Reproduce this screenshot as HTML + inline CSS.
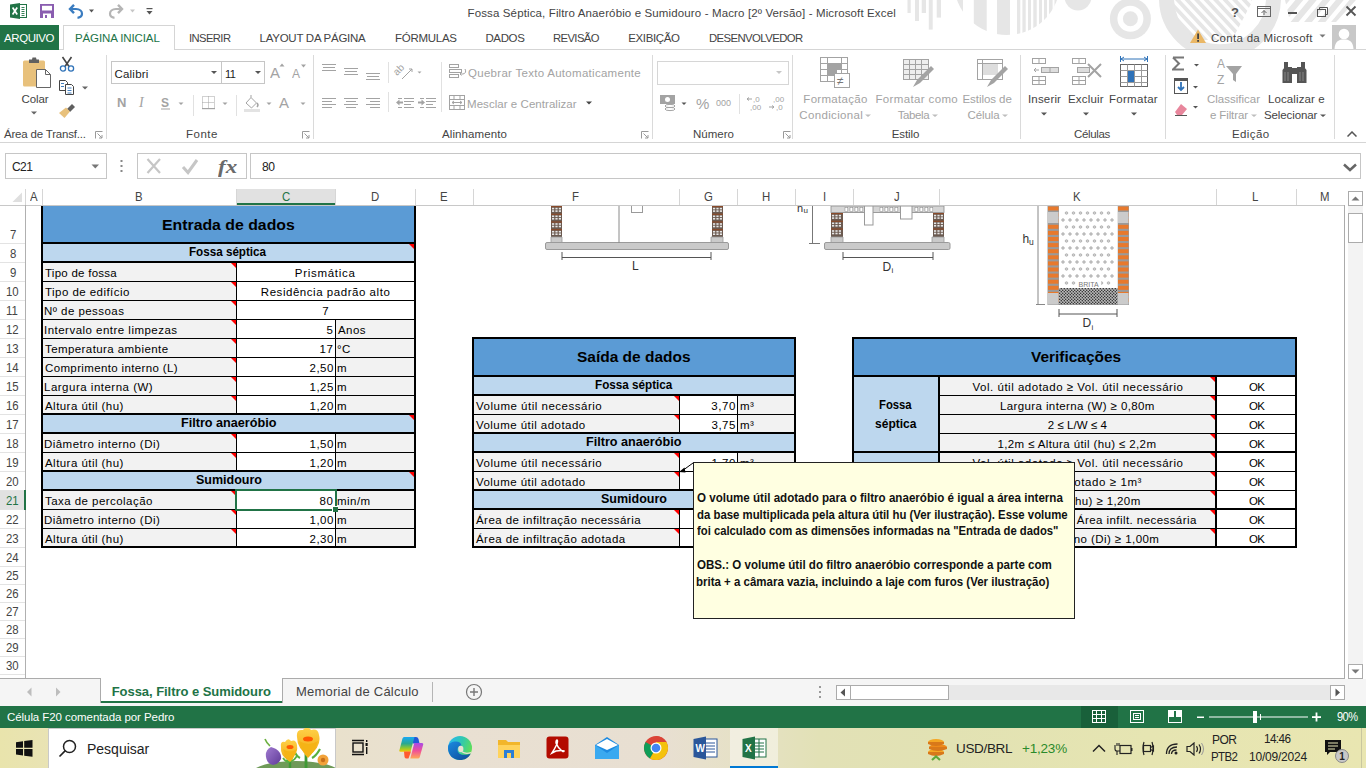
<!DOCTYPE html>
<html><head><meta charset="utf-8"><style>
html,body{margin:0;padding:0;width:1366px;height:768px;overflow:hidden;background:#fff;}
body{position:relative;font-family:"Liberation Sans",sans-serif;}
div{position:absolute;box-sizing:border-box;}
.t{white-space:pre;transform-origin:0 0;}
.s{-webkit-text-stroke:0.1px currentColor;}
</style></head><body>
<svg style="position:absolute;left:0px;top:0px;" width="1366" height="49" viewBox="0 0 1366 49"><rect x="907.5" y="0" width="3.2000000000000455" height="13" fill="#e6e6e6"/><rect x="915" y="0" width="4" height="21" fill="#e6e6e6"/><rect x="921.7" y="0" width="4.2999999999999545" height="13" fill="#e6e6e6"/><rect x="928.8" y="0" width="3.900000000000091" height="29.6" fill="#e6e6e6"/><rect x="936.7" y="0" width="4.2999999999999545" height="17.6" fill="#e6e6e6"/><clipPath id="c1"><circle cx="1007" cy="-18.2" r="53.2"/></clipPath><g clip-path="url(#c1)"><rect x="950" y="0" width="13" height="40" fill="#e6e6e6"/><rect x="973.8" y="0" width="12.900000000000091" height="40" fill="#e6e6e6"/><rect x="997" y="0" width="13" height="40" fill="#e6e6e6"/><rect x="1017" y="0" width="3.2999999999999545" height="40" fill="#e6e6e6"/><rect x="1022.4" y="0" width="3.300000000000068" height="40" fill="#e6e6e6"/><rect x="1028" y="0" width="3" height="40" fill="#e6e6e6"/><rect x="1033.3" y="0" width="3.400000000000091" height="40" fill="#e6e6e6"/><rect x="1039" y="0" width="3" height="40" fill="#e6e6e6"/><rect x="1044" y="0" width="3" height="40" fill="#e6e6e6"/><rect x="1049" y="0" width="3.599999999999909" height="40" fill="#e6e6e6"/><rect x="1054.5" y="0" width="3.5" height="40" fill="#e6e6e6"/></g><circle cx="1078" cy="-3" r="13.5" fill="#e6e6e6"/><circle cx="1130.4" cy="18.7" r="20.5" fill="#e6e6e6"/><circle cx="1130.4" cy="18.7" r="13" fill="#fff"/><circle cx="1130.4" cy="18.7" r="7.5" fill="#e6e6e6"/><clipPath id="c2"><circle cx="1220" cy="-1.7" r="47"/></clipPath><clipPath id="c2b"><path d="M1150 -10 H1252 V2 L1232 40 H1150 Z"/></clipPath><circle cx="1220" cy="-1.7" r="53.5" fill="none" stroke="#e6e6e6" stroke-width="15"/><g clip-path="url(#c2)"><g clip-path="url(#c2b)"><line x1="1140.0" y1="-20" x2="1210.0" y2="55" stroke="#e6e6e6" stroke-width="3.8"/><line x1="1149.5" y1="-20" x2="1219.5" y2="55" stroke="#e6e6e6" stroke-width="3.8"/><line x1="1159.0" y1="-20" x2="1229.0" y2="55" stroke="#e6e6e6" stroke-width="3.8"/><line x1="1168.5" y1="-20" x2="1238.5" y2="55" stroke="#e6e6e6" stroke-width="3.8"/><line x1="1178.0" y1="-20" x2="1248.0" y2="55" stroke="#e6e6e6" stroke-width="3.8"/><line x1="1187.5" y1="-20" x2="1257.5" y2="55" stroke="#e6e6e6" stroke-width="3.8"/><line x1="1197.0" y1="-20" x2="1267.0" y2="55" stroke="#e6e6e6" stroke-width="3.8"/><line x1="1206.5" y1="-20" x2="1276.5" y2="55" stroke="#e6e6e6" stroke-width="3.8"/><line x1="1216.0" y1="-20" x2="1286.0" y2="55" stroke="#e6e6e6" stroke-width="3.8"/><line x1="1225.5" y1="-20" x2="1295.5" y2="55" stroke="#e6e6e6" stroke-width="3.8"/><line x1="1235.0" y1="-20" x2="1305.0" y2="55" stroke="#e6e6e6" stroke-width="3.8"/><line x1="1244.5" y1="-20" x2="1314.5" y2="55" stroke="#e6e6e6" stroke-width="3.8"/><line x1="1254.0" y1="-20" x2="1324.0" y2="55" stroke="#e6e6e6" stroke-width="3.8"/><line x1="1263.5" y1="-20" x2="1333.5" y2="55" stroke="#e6e6e6" stroke-width="3.8"/></g></g><clipPath id="c3"><path d="M1285 0 H1356 L1336 22 H1290 Z"/></clipPath><g clip-path="url(#c3)"><line x1="1290.0" y1="-5" x2="1265.0" y2="25" stroke="#e6e6e6" stroke-width="6"/><line x1="1303.5" y1="-5" x2="1278.5" y2="25" stroke="#e6e6e6" stroke-width="6"/><line x1="1317.0" y1="-5" x2="1292.0" y2="25" stroke="#e6e6e6" stroke-width="6"/><line x1="1330.5" y1="-5" x2="1305.5" y2="25" stroke="#e6e6e6" stroke-width="6"/><line x1="1344.0" y1="-5" x2="1319.0" y2="25" stroke="#e6e6e6" stroke-width="6"/><line x1="1357.5" y1="-5" x2="1332.5" y2="25" stroke="#e6e6e6" stroke-width="6"/><line x1="1371.0" y1="-5" x2="1346.0" y2="25" stroke="#e6e6e6" stroke-width="6"/></g></svg>
<svg style="position:absolute;left:9px;top:2px;" width="19" height="18" viewBox="0 0 19 18"><rect x="10.5" y="2.5" width="7" height="13" fill="#fff" stroke="#217346" stroke-width="1"/>
<path d="M12.5 5.5h3M12.5 7.5h3M12.5 9.5h3M12.5 11.5h3M12.5 13.5h3" stroke="#217346" stroke-width="0.9"/>
<path d="M1 2.5 L11 1 L11 17 L1 15.5 Z" fill="#217346"/>
<path d="M3.6 5.5 L8.2 12.5 M8.2 5.5 L3.6 12.5" stroke="#fff" stroke-width="1.7"/></svg>
<svg style="position:absolute;left:40px;top:4px;" width="14" height="14" viewBox="0 0 14 14"><rect x="0" y="0" width="14" height="14" fill="#8a5db0"/>
<rect x="2" y="1.8" width="10" height="4.7" fill="#fff"/><rect x="3" y="9.5" width="8" height="4.5" fill="#fff"/><rect x="5" y="11" width="2" height="3" fill="#8a5db0"/></svg>
<svg style="position:absolute;left:67px;top:3px;" width="30" height="16" viewBox="0 0 30 16"><path d="M7 1.8 L3 6 L7 10.2" fill="none" stroke="#3a7cc0" stroke-width="2.4"/>
<path d="M3.5 6 H9 C13 6 15 8.3 15 10.8 C15 13.3 13 14.5 10.5 14.8" fill="none" stroke="#3a7cc0" stroke-width="2.2"/>
<path d="M22 6.5 L27 6.5 L24.5 9.5 Z" fill="#555"/></svg>
<svg style="position:absolute;left:108px;top:3px;" width="30" height="16" viewBox="0 0 30 16"><path d="M10 1.8 L14 6 L10 10.2" fill="none" stroke="#b5b5b5" stroke-width="2.4"/>
<path d="M13.5 6 H8 C4 6 2 8.3 2 10.8 C2 13.3 4 14.5 6.5 14.8" fill="none" stroke="#b5b5b5" stroke-width="2.2"/>
<path d="M22 6.5 L27 6.5 L24.5 9.5 Z" fill="#c6c6c6"/></svg>
<svg style="position:absolute;left:146px;top:8px;" width="8" height="8" viewBox="0 0 8 8"><rect x="0.5" y="0" width="6" height="1.2" fill="#555"/><path d="M0.5 3 L6.5 3 L3.5 6.5 Z" fill="#555"/></svg>
<div class="t" style="left:467.50px;top:8px;font-weight:400;font-size:11.5px;line-height:11.5px;font-family:'Liberation Sans';color:#444444;letter-spacing:0.131px;">Fossa Séptica, Filtro Anaeróbio e Sumidouro - Macro [2º Versão] - Microsoft Excel</div>
<svg style="position:absolute;left:1228px;top:4px;" width="130" height="16" viewBox="0 0 130 16"><text x="3" y="12.5" font-family="Liberation Sans" font-weight="700" font-size="13" fill="#555">?</text>
<rect x="29.5" y="2.5" width="13" height="10" fill="none" stroke="#666" stroke-width="1"/><path d="M30 4.5h12" stroke="#666"/><path d="M36 11V6.5 M33.5 9 L36 6.5 L38.5 9" stroke="#666" fill="none"/>
<rect x="60" y="8" width="9" height="2" fill="#555"/>
<rect x="89.5" y="5.5" width="8" height="7" fill="none" stroke="#555"/><path d="M91.5 5.5V3.5h8v7h-2" fill="none" stroke="#555"/>
<path d="M118.5 2.5 L127.5 11.5 M127.5 2.5 L118.5 11.5" stroke="#555" stroke-width="1.8"/></svg>
<div style="left:0px;top:49px;width:1366px;height:1px;background:#d5d5d5;"></div>
<div style="left:0px;top:25px;width:59px;height:25px;background:#217346;"></div>
<div class="t" style="left:4.00px;top:33px;font-weight:400;font-size:11.5px;line-height:11.5px;font-family:'Liberation Sans';color:#fff;letter-spacing:-0.417px;">ARQUIVO</div>
<div style="left:63px;top:25px;width:112px;height:25px;background:#fff;border:1px solid #d5d5d5;border-bottom:none"></div>
<div class="t" style="left:75.00px;top:33px;font-weight:400;font-size:11.5px;line-height:11.5px;font-family:'Liberation Sans';color:#217346;letter-spacing:-0.115px;">PÁGINA INICIAL</div>
<div class="t" style="left:189.32px;top:33px;font-weight:400;font-size:11.5px;line-height:11.5px;font-family:'Liberation Sans';color:#444444;transform:scaleX(0.9758);letter-spacing:-0.600px;">INSERIR</div>
<div class="t" style="left:259.60px;top:33px;font-weight:400;font-size:11.5px;line-height:11.5px;font-family:'Liberation Sans';color:#444444;letter-spacing:-0.267px;">LAYOUT DA PÁGINA</div>
<div class="t" style="left:395.00px;top:33px;font-weight:400;font-size:11.5px;line-height:11.5px;font-family:'Liberation Sans';color:#444444;letter-spacing:-0.271px;">FÓRMULAS</div>
<div class="t" style="left:485.40px;top:33px;font-weight:400;font-size:11.5px;line-height:11.5px;font-family:'Liberation Sans';color:#444444;letter-spacing:-0.350px;">DADOS</div>
<div class="t" style="left:553.32px;top:33px;font-weight:400;font-size:11.5px;line-height:11.5px;font-family:'Liberation Sans';color:#444444;transform:scaleX(0.9784);letter-spacing:-0.600px;">REVISÃO</div>
<div class="t" style="left:628.30px;top:33px;font-weight:400;font-size:11.5px;line-height:11.5px;font-family:'Liberation Sans';color:#444444;letter-spacing:-0.386px;">EXIBIÇÃO</div>
<div class="t" style="left:708.51px;top:33px;font-weight:400;font-size:11.5px;line-height:11.5px;font-family:'Liberation Sans';color:#444444;transform:scaleX(0.9861);letter-spacing:-0.600px;">DESENVOLVEDOR</div>
<svg style="position:absolute;left:1190px;top:29px;" width="18" height="15" viewBox="0 0 18 15"><path d="M8 0.5 L16 14 L0 14 Z" fill="#eab765"/><rect x="7.2" y="4.5" width="1.8" height="5.5" fill="#444"/><rect x="7.2" y="11" width="1.8" height="1.8" fill="#444"/></svg>
<div class="t" style="left:1211.00px;top:33px;font-weight:400;font-size:11.5px;line-height:11.5px;font-family:'Liberation Sans';color:#444444;letter-spacing:0.294px;">Conta da Microsoft</div>
<svg style="position:absolute;left:1319px;top:34px;" width="8" height="5" viewBox="0 0 8 5"><path d="M0.5 0.5 L6.5 0.5 L3.5 3.5 Z" fill="#777"/></svg>
<svg style="position:absolute;left:1332px;top:25px;" width="24" height="24" viewBox="0 0 24 24"><rect width="24" height="24" fill="#c8c8c8"/><circle cx="12" cy="9" r="5.3" fill="#fff"/><path d="M2.5 24 C3 16 7 14.5 12 14.5 C17 14.5 21 16 21.5 24 Z" fill="#fff"/></svg>
<div style="left:0px;top:142px;width:1366px;height:1px;background:#d5d5d5;"></div>
<div style="left:106px;top:55px;width:1px;height:84px;background:#dadada;"></div>
<div style="left:313px;top:55px;width:1px;height:84px;background:#dadada;"></div>
<div style="left:652px;top:55px;width:1px;height:84px;background:#dadada;"></div>
<div style="left:792px;top:55px;width:1px;height:84px;background:#dadada;"></div>
<div style="left:1020px;top:55px;width:1px;height:84px;background:#dadada;"></div>
<div style="left:1165px;top:55px;width:1px;height:84px;background:#dadada;"></div>
<div style="left:1334px;top:55px;width:1px;height:84px;background:#dadada;"></div>
<div class="t" style="left:4.00px;top:129px;font-weight:400;font-size:11.5px;line-height:11.5px;font-family:'Liberation Sans';color:#444444;letter-spacing:-0.188px;">Área de Transf...</div>
<div class="t" style="left:186.00px;top:129px;font-weight:400;font-size:11.5px;line-height:11.5px;font-family:'Liberation Sans';color:#444444;letter-spacing:0.500px;">Fonte</div>
<div class="t" style="left:442.00px;top:129px;font-weight:400;font-size:11.5px;line-height:11.5px;font-family:'Liberation Sans';color:#444444;letter-spacing:0.100px;">Alinhamento</div>
<div class="t" style="left:693.00px;top:129px;font-weight:400;font-size:11.5px;line-height:11.5px;font-family:'Liberation Sans';color:#444444;">Número</div>
<div class="t" style="left:891.70px;top:129px;font-weight:400;font-size:11.5px;line-height:11.5px;font-family:'Liberation Sans';color:#444444;letter-spacing:-0.080px;">Estilo</div>
<div class="t" style="left:1074.00px;top:129px;font-weight:400;font-size:11.5px;line-height:11.5px;font-family:'Liberation Sans';color:#444444;letter-spacing:-0.333px;">Células</div>
<div class="t" style="left:1232.00px;top:129px;font-weight:400;font-size:11.5px;line-height:11.5px;font-family:'Liberation Sans';color:#444444;letter-spacing:0.400px;">Edição</div>
<svg style="position:absolute;left:95px;top:131px;" width="8" height="8" viewBox="0 0 8 8"><path d="M0.5 7.5V0.5h7" fill="none" stroke="#9a9a9a"/><path d="M2.5 2.5 L7 7 M4 7h3v-3" fill="none" stroke="#9a9a9a"/></svg>
<svg style="position:absolute;left:302px;top:131px;" width="8" height="8" viewBox="0 0 8 8"><path d="M0.5 7.5V0.5h7" fill="none" stroke="#9a9a9a"/><path d="M2.5 2.5 L7 7 M4 7h3v-3" fill="none" stroke="#9a9a9a"/></svg>
<svg style="position:absolute;left:641px;top:131px;" width="8" height="8" viewBox="0 0 8 8"><path d="M0.5 7.5V0.5h7" fill="none" stroke="#9a9a9a"/><path d="M2.5 2.5 L7 7 M4 7h3v-3" fill="none" stroke="#9a9a9a"/></svg>
<svg style="position:absolute;left:783px;top:131px;" width="8" height="8" viewBox="0 0 8 8"><path d="M0.5 7.5V0.5h7" fill="none" stroke="#9a9a9a"/><path d="M2.5 2.5 L7 7 M4 7h3v-3" fill="none" stroke="#9a9a9a"/></svg>
<svg style="position:absolute;left:22px;top:57px;" width="30" height="32" viewBox="0 0 30 32"><rect x="1" y="3.5" width="22" height="26" rx="1.5" fill="#e8c17c"/>
<path d="M7 6 L7 2.5 L10 2.5 L10.5 0.5 L14 0.5 L14.5 2.5 L17 2.5 L17 6 Z" fill="#5f5f5f"/>
<path d="M14.5 12.5 L23.5 12.5 L28.5 17.5 L28.5 30.5 L14.5 30.5 Z" fill="#fff" stroke="#666" stroke-width="1"/>
<path d="M23.5 12.5 V17.5 H28.5" fill="none" stroke="#666" stroke-width="1"/></svg>
<div class="t" style="left:21.50px;top:94px;font-weight:400;font-size:11.5px;line-height:11.5px;font-family:'Liberation Sans';color:#444444;letter-spacing:-0.125px;">Colar</div>
<svg style="position:absolute;left:31px;top:111px;" width="7" height="5" viewBox="0 0 7 5"><path d="M0 0.5 L6 0.5 L3 3.5 Z" fill="#666"/></svg>
<svg style="position:absolute;left:59px;top:56px;" width="16" height="16" viewBox="0 0 16 16"><path d="M3.5 1 L10 10.5 M12.5 1 L6 10.5" stroke="#444" stroke-width="1.6"/>
<circle cx="4" cy="12.5" r="2.6" fill="none" stroke="#2f72b8" stroke-width="1.3"/><circle cx="12" cy="12.5" r="2.6" fill="none" stroke="#2f72b8" stroke-width="1.3"/></svg>
<svg style="position:absolute;left:58px;top:79px;" width="17" height="16" viewBox="0 0 17 16"><path d="M1.5 1.5h6l2 2v8h-8z" fill="#fff" stroke="#444"/><path d="M3 4.5h3M3 7.5h3" stroke="#2f72b8" stroke-width="0.9"/>
<path d="M7.5 5.5h6l2 2v8h-8z" fill="#fff" stroke="#444"/><path d="M9.5 9h4M9.5 11.5h4M9.5 14h4" stroke="#2f72b8" stroke-width="0.9"/></svg>
<svg style="position:absolute;left:82px;top:86px;" width="7" height="5" viewBox="0 0 7 5"><path d="M0 0.5 L6 0.5 L3 3.5 Z" fill="#666"/></svg>
<svg style="position:absolute;left:58px;top:102px;" width="18" height="16" viewBox="0 0 18 16"><path d="M9 7 L14 2 L17 5 L12 10 Z" fill="#5f5f5f"/><path d="M1 11 L8 5.5 L12 9.5 L6.5 16 Z" fill="#e8c17c"/></svg>
<div style="left:111px;top:61px;width:111px;height:23px;background:#fff;box-shadow:inset 0 0 0 1px #c6c6c6;"></div>
<div style="left:221px;top:61px;width:44px;height:23px;background:#fff;box-shadow:inset 0 0 0 1px #c6c6c6;"></div>
<div class="t" style="left:114.40px;top:69px;font-weight:400;font-size:11.5px;line-height:11.5px;font-family:'Liberation Sans';color:#222;letter-spacing:0.233px;">Calibri</div>
<div class="t" style="left:225.04px;top:69px;font-weight:400;font-size:11.5px;line-height:11.5px;font-family:'Liberation Sans';color:#222;transform:scaleX(0.9615);letter-spacing:-0.600px;">11</div>
<svg style="position:absolute;left:211px;top:71px;" width="7" height="4" viewBox="0 0 7 4"><path d="M0 0 L6 0 L3 3 Z" fill="#555"/></svg>
<svg style="position:absolute;left:255px;top:71px;" width="7" height="4" viewBox="0 0 7 4"><path d="M0 0 L6 0 L3 3 Z" fill="#555"/></svg>
<svg style="position:absolute;left:270px;top:63px;" width="16" height="18" viewBox="0 0 16 18"><text x="0" y="15" font-family="Liberation Sans" font-size="15" fill="#a3a3a3">A</text><path d="M9.5 3.5 L12 0.5 L14.5 3.5 Z" fill="#a3a3a3"/></svg>
<svg style="position:absolute;left:292px;top:64px;" width="15" height="16" viewBox="0 0 15 16"><text x="0" y="14" font-family="Liberation Sans" font-size="12" fill="#a3a3a3">A</text><path d="M9 0.5 L14 0.5 L11.5 3.5 Z" fill="#a3a3a3"/></svg>
<svg style="position:absolute;left:115px;top:94px;" width="195" height="22" viewBox="0 0 195 22"><text x="2" y="13" font-family="Liberation Sans" font-weight="700" font-size="13" fill="#a3a3a3">N</text>
<text x="24" y="13" font-family="Liberation Serif" font-style="italic" font-size="14" fill="#a3a3a3">I</text>
<text x="46" y="13" font-family="Liberation Sans" font-weight="700" font-size="12" fill="#a3a3a3">S</text><rect x="46" y="14.5" width="9" height="1" fill="#a3a3a3"/>
<path d="M63.5 8.5 L68.5 8.5 L66 11 Z" fill="#a3a3a3"/>
<rect x="78" y="1" width="1" height="22" fill="#e1e1e1"/>
<rect x="87.5" y="2.5" width="12" height="12" fill="none" stroke="#a3a3a3" stroke-dasharray="1 1"/><path d="M93.5 2.5v12M87.5 8.5h12" stroke="#a3a3a3" stroke-dasharray="1 1"/><rect x="87" y="14" width="13" height="1.2" fill="#a3a3a3"/>
<path d="M107.5 8.5 L112.5 8.5 L110 11 Z" fill="#a3a3a3"/>
<rect x="121" y="1" width="1" height="22" fill="#e1e1e1"/>
<path d="M131 9 L136 3.5 L141.5 9 L136.5 14 Z" fill="none" stroke="#a3a3a3"/><path d="M136 3.5 V1" stroke="#a3a3a3"/><path d="M142 9 q2 2 0 4" fill="none" stroke="#a3a3a3" stroke-width="1.5"/>
<rect x="129" y="15" width="16" height="3" fill="#e3e3e3"/>
<path d="M151.5 8.5 L156.5 8.5 L154 11 Z" fill="#a3a3a3"/>
<text x="164" y="14" font-family="Liberation Sans" font-size="15" fill="#a3a3a3">A</text>
<path d="M185.5 8.5 L190.5 8.5 L188 11 Z" fill="#a3a3a3"/></svg>
<svg style="position:absolute;left:321px;top:62px;" width="140" height="50" viewBox="0 0 140 50"><rect x="1" y="2" width="14" height="1" fill="#a3a3a3"/><rect x="2" y="5" width="12" height="1" fill="#a3a3a3"/><rect x="1" y="8" width="14" height="1" fill="#a3a3a3"/><rect x="23" y="6" width="14" height="1" fill="#a3a3a3"/><rect x="24" y="9" width="12" height="1" fill="#a3a3a3"/><rect x="23" y="12" width="14" height="1" fill="#a3a3a3"/><rect x="45" y="11" width="14" height="1" fill="#a3a3a3"/><rect x="46" y="14" width="12" height="1" fill="#a3a3a3"/><rect x="45" y="17" width="14" height="1" fill="#a3a3a3"/><rect x="1" y="36" width="14" height="1" fill="#a3a3a3"/><rect x="1" y="39" width="10" height="1" fill="#a3a3a3"/><rect x="1" y="42" width="14" height="1" fill="#a3a3a3"/><rect x="1" y="45" width="10" height="1" fill="#a3a3a3"/><rect x="23" y="36" width="14" height="1" fill="#a3a3a3"/><rect x="25" y="39" width="10" height="1" fill="#a3a3a3"/><rect x="23" y="42" width="14" height="1" fill="#a3a3a3"/><rect x="25" y="45" width="10" height="1" fill="#a3a3a3"/><rect x="45" y="36" width="14" height="1" fill="#a3a3a3"/><rect x="49" y="39" width="10" height="1" fill="#a3a3a3"/><rect x="45" y="42" width="14" height="1" fill="#a3a3a3"/><rect x="49" y="45" width="10" height="1" fill="#a3a3a3"/><rect x="67" y="-1" width="1" height="22" fill="#e1e1e1"/><rect x="67" y="30" width="1" height="22" fill="#e1e1e1"/><rect x="77" y="36" width="4" height="1" fill="#a3a3a3"/><rect x="77" y="45" width="4" height="1" fill="#a3a3a3"/><rect x="83" y="36" width="10" height="1" fill="#a3a3a3"/><rect x="83" y="39" width="10" height="1" fill="#a3a3a3"/><rect x="83" y="42" width="7" height="1" fill="#a3a3a3"/><rect x="83" y="45" width="10" height="1" fill="#a3a3a3"/><path d="M75 40.5 L78.5 37.5 V39.5 H82 V41.5 H78.5 V43.5 Z" fill="#a3a3a3"/><rect x="99" y="36" width="4" height="1" fill="#a3a3a3"/><rect x="99" y="45" width="4" height="1" fill="#a3a3a3"/><rect x="105" y="36" width="10" height="1" fill="#a3a3a3"/><rect x="105" y="39" width="10" height="1" fill="#a3a3a3"/><rect x="105" y="42" width="7" height="1" fill="#a3a3a3"/><rect x="105" y="45" width="10" height="1" fill="#a3a3a3"/><path d="M104 40.5 L100.5 37.5 V39.5 H97 V41.5 H100.5 V43.5 Z" fill="#a3a3a3"/><text x="74.5" y="12.5" font-family="Liberation Sans" font-size="10" fill="#a3a3a3" transform="rotate(-45 80 10) translate(0 -2.5)">ab</text><path d="M81 17 L91 7 M88 7 h3 v3" stroke="#a3a3a3" fill="none"/><path d="M96.5 9.5 L100.5 9.5 L98.5 11.5 Z" fill="#a3a3a3"/><rect x="120" y="-2" width="1" height="54" fill="#e1e1e1"/></svg>
<svg style="position:absolute;left:448px;top:63px;" width="20" height="18" viewBox="0 0 20 18"><rect x="1.5" y="1.5" width="9" height="3" fill="none" stroke="#a3a3a3"/><rect x="1.5" y="6.5" width="12" height="3" fill="none" stroke="#a3a3a3"/><rect x="1.5" y="11.5" width="9" height="3" fill="none" stroke="#a3a3a3"/>
<path d="M17 6 q2 4 -2 5 h-3 M13.5 9.5 L12 11 L13.5 12.5" fill="none" stroke="#a3a3a3"/></svg>
<div class="t" style="left:468.00px;top:68px;font-weight:400;font-size:11.5px;line-height:11.5px;font-family:'Liberation Sans';color:#a3a3a3;letter-spacing:0.286px;">Quebrar Texto Automaticamente</div>
<svg style="position:absolute;left:448px;top:94px;" width="18" height="17" viewBox="0 0 18 17"><rect x="1.5" y="1.5" width="15" height="14" fill="none" stroke="#a3a3a3"/><path d="M1.5 5.5h15M1.5 11.5h15M6 1.5v4M12 1.5v4M6 11.5v4M12 11.5v4" stroke="#a3a3a3"/>
<path d="M4 8.5h10 M4 8.5 l2 -1.5 M4 8.5 l2 1.5 M14 8.5 l-2 -1.5 M14 8.5 l-2 1.5" stroke="#a3a3a3" fill="none"/></svg>
<div class="t" style="left:467.00px;top:99px;font-weight:400;font-size:11.5px;line-height:11.5px;font-family:'Liberation Sans';color:#a3a3a3;letter-spacing:0.050px;">Mesclar e Centralizar</div>
<svg style="position:absolute;left:586px;top:101px;" width="7" height="5" viewBox="0 0 7 5"><path d="M0 0.5 L6 0.5 L3 3.5 Z" fill="#444"/></svg>
<div style="left:657px;top:61px;width:132px;height:24px;background:#fff;box-shadow:inset 0 0 0 1px #d6d6d6;"></div>
<svg style="position:absolute;left:776px;top:71px;" width="7" height="4" viewBox="0 0 7 4"><path d="M0 0 L6 0 L3 3 Z" fill="#c6c6c6"/></svg>
<svg style="position:absolute;left:659px;top:94px;" width="135" height="20" viewBox="0 0 135 20"><rect x="1" y="1" width="15" height="9" fill="#a3a3a3"/><circle cx="8.5" cy="5.5" r="2.5" fill="#fff"/>
<ellipse cx="11" cy="12" rx="5" ry="1.6" fill="none" stroke="#a3a3a3"/><ellipse cx="11" cy="15" rx="5" ry="1.6" fill="none" stroke="#a3a3a3"/>
<path d="M22.5 8.5 L27.5 8.5 L25 11 Z" fill="#555"/>
<text x="37" y="14.5" font-family="Liberation Sans" font-size="15" fill="#a3a3a3">%</text>
<text x="57" y="12" font-family="Liberation Sans" font-size="9" fill="#a3a3a3">000</text>
<rect x="80" y="0" width="1" height="20" fill="#e1e1e1"/>
<text x="94" y="8" font-family="Liberation Sans" font-size="8" fill="#a3a3a3">,0</text><text x="91" y="16" font-family="Liberation Sans" font-size="8" fill="#a3a3a3">,00</text><path d="M88 5 h5 M88 5 l2 -1.5 M88 5 l2 1.5" stroke="#a3a3a3" fill="none"/>
<text x="114" y="8" font-family="Liberation Sans" font-size="8" fill="#a3a3a3">,00</text><text x="117" y="16" font-family="Liberation Sans" font-size="8" fill="#a3a3a3">,0</text><path d="M110 13 h5 M115 13 l-2 -1.5 M115 13 l-2 1.5" stroke="#a3a3a3" fill="none"/></svg>
<svg style="position:absolute;left:820px;top:57px;" width="32" height="32" viewBox="0 0 32 32"><rect x="0.5" y="0.5" width="27" height="24" fill="#fff" stroke="#a3a3a3"/>
<path d="M0.5 6.5h27M0.5 12.5h27M0.5 18.5h27M7.5 0.5v24M21.5 0.5v24" stroke="#a3a3a3"/>
<rect x="8" y="7" width="13" height="5" fill="#a3a3a3"/><rect x="8" y="13" width="9" height="5" fill="#a3a3a3"/>
<rect x="14.5" y="16.5" width="15" height="14" fill="#fff" stroke="#a3a3a3"/><text x="17" y="28" font-family="Liberation Sans" font-size="12" fill="#777">≠</text></svg>
<svg style="position:absolute;left:903px;top:59px;" width="32" height="30" viewBox="0 0 32 30"><rect x="0.5" y="0.5" width="25" height="20" fill="#eee" stroke="#a3a3a3"/><path d="M0.5 5.5h25M0.5 10.5h25M0.5 15.5h25M6.5 0.5v20M12.5 0.5v20M18.5 0.5v20" stroke="#a3a3a3"/>
<path d="M10 28 L14 21 L28 7 L31 10 L17 24 Z" fill="#a3a3a3"/></svg>
<svg style="position:absolute;left:977px;top:59px;" width="32" height="30" viewBox="0 0 32 30"><rect x="0.5" y="0.5" width="25" height="20" fill="#fff" stroke="#a3a3a3"/><rect x="5" y="4" width="16" height="12" fill="#ddd"/><path d="M0.5 4.5h25M5.5 0.5v20" stroke="#a3a3a3"/>
<path d="M10 28 L14 21 L28 7 L31 10 L17 24 Z" fill="#a3a3a3"/></svg>
<div class="t" style="left:803.30px;top:94px;font-weight:400;font-size:11.5px;line-height:11.5px;font-family:'Liberation Sans';color:#a3a3a3;letter-spacing:0.311px;">Formatação</div>
<div class="t" style="left:799.30px;top:110px;font-weight:400;font-size:11.5px;line-height:11.5px;font-family:'Liberation Sans';color:#a3a3a3;letter-spacing:0.340px;">Condicional</div>
<div class="t" style="left:875.40px;top:94px;font-weight:400;font-size:11.5px;line-height:11.5px;font-family:'Liberation Sans';color:#a3a3a3;letter-spacing:0.367px;">Formatar como</div>
<div class="t" style="left:897.70px;top:110px;font-weight:400;font-size:11.5px;line-height:11.5px;font-family:'Liberation Sans';color:#a3a3a3;letter-spacing:-0.400px;">Tabela</div>
<div class="t" style="left:962.50px;top:94px;font-weight:400;font-size:11.5px;line-height:11.5px;font-family:'Liberation Sans';color:#a3a3a3;letter-spacing:-0.056px;">Estilos de</div>
<div class="t" style="left:967.50px;top:110px;font-weight:400;font-size:11.5px;line-height:11.5px;font-family:'Liberation Sans';color:#a3a3a3;letter-spacing:-0.100px;">Célula</div>
<svg style="position:absolute;left:865px;top:114px;" width="7" height="4" viewBox="0 0 7 4"><path d="M0 0.5 L6 0.5 L3 3 Z" fill="#bdbdbd"/></svg>
<svg style="position:absolute;left:932px;top:114px;" width="7" height="4" viewBox="0 0 7 4"><path d="M0 0.5 L6 0.5 L3 3 Z" fill="#bdbdbd"/></svg>
<svg style="position:absolute;left:1002px;top:114px;" width="7" height="4" viewBox="0 0 7 4"><path d="M0 0.5 L6 0.5 L3 3 Z" fill="#bdbdbd"/></svg>
<svg style="position:absolute;left:1031px;top:57px;" width="30" height="30" viewBox="0 0 30 30"><rect x="1.5" y="1.5" width="13" height="5" fill="none" stroke="#a3a3a3"/><path d="M8 1.5v5" stroke="#a3a3a3"/>
<rect x="10.5" y="10.5" width="17" height="5" fill="#ddd" stroke="#a3a3a3"/><path d="M19 10.5v5" stroke="#a3a3a3"/><path d="M3 13h5 M3 13 l2 -2 M3 13 l2 2" stroke="#a3a3a3" fill="none"/>
<rect x="1.5" y="19.5" width="13" height="8" fill="none" stroke="#a3a3a3"/><path d="M1.5 23.5h13M8 19.5v8" stroke="#a3a3a3"/></svg>
<div class="t" style="left:1028.00px;top:94px;font-weight:400;font-size:11.5px;line-height:11.5px;font-family:'Liberation Sans';color:#444444;letter-spacing:0.167px;">Inserir</div>
<svg style="position:absolute;left:1071px;top:57px;" width="32" height="30" viewBox="0 0 32 30"><rect x="1.5" y="1.5" width="13" height="5" fill="none" stroke="#a3a3a3"/><path d="M8 1.5v5" stroke="#a3a3a3"/>
<rect x="6.5" y="10.5" width="12" height="5" fill="#ddd" stroke="#a3a3a3"/>
<rect x="1.5" y="19.5" width="13" height="8" fill="none" stroke="#a3a3a3"/><path d="M1.5 23.5h13M8 19.5v8" stroke="#a3a3a3"/>
<path d="M17 7 L30 20 M30 7 L17 20" stroke="#a3a3a3" stroke-width="2"/></svg>
<div class="t" style="left:1068.00px;top:94px;font-weight:400;font-size:11.5px;line-height:11.5px;font-family:'Liberation Sans';color:#444444;letter-spacing:0.167px;">Excluir</div>
<svg style="position:absolute;left:1119px;top:55px;" width="31" height="34" viewBox="0 0 31 34"><path d="M2 4h26 M2 4 l3 -2 M2 4 l3 2 M28 4 l-3 -2 M28 4 l-3 2 M1.5 1v6 M28.5 1v6" stroke="#2f72b8" fill="none"/>
<rect x="1.5" y="9.5" width="27" height="22" fill="#fff" stroke="#666"/><path d="M1.5 15.5h27M1.5 21.5h27M1.5 27.5h27M8.5 9.5v22M15.5 9.5v22M22.5 9.5v22" stroke="#9a9a9a"/>
<rect x="9" y="16" width="6" height="11" fill="#2f72b8"/></svg>
<div class="t" style="left:1109.00px;top:94px;font-weight:400;font-size:11.5px;line-height:11.5px;font-family:'Liberation Sans';color:#444444;letter-spacing:0.286px;">Formatar</div>
<svg style="position:absolute;left:1041px;top:112px;" width="7" height="5" viewBox="0 0 7 5"><path d="M0 0.5 L6 0.5 L3 3.5 Z" fill="#555"/></svg>
<svg style="position:absolute;left:1083px;top:112px;" width="7" height="5" viewBox="0 0 7 5"><path d="M0 0.5 L6 0.5 L3 3.5 Z" fill="#555"/></svg>
<svg style="position:absolute;left:1131px;top:112px;" width="7" height="5" viewBox="0 0 7 5"><path d="M0 0.5 L6 0.5 L3 3.5 Z" fill="#555"/></svg>
<svg style="position:absolute;left:1172px;top:56px;" width="30" height="64" viewBox="0 0 30 64"><path d="M1 1.5h11 M1 1.5 L7 7.5 L1 13.5 h11" fill="none" stroke="#777" stroke-width="2"/>
<path d="M22 8 L27 8 L24.5 10.5 Z" fill="#555"/>
<rect x="2.5" y="22.5" width="13" height="15" fill="#fff" stroke="#555"/><rect x="2" y="22" width="14" height="3" fill="#555"/><path d="M9 26v8 M6 31 L9 34 L12 31" stroke="#2f72b8" stroke-width="1.8" fill="none"/>
<path d="M21 30 L26 30 L23.5 32.5 Z" fill="#555"/>
<path d="M3 56 L9 48 L15 53 L10 59 L5 59 Z" fill="#e8869c"/><path d="M3 59.5h12" stroke="#555"/>
<path d="M21 50 L26 50 L23.5 52.5 Z" fill="#555"/></svg>
<svg style="position:absolute;left:1217px;top:57px;" width="26" height="30" viewBox="0 0 26 30"><text x="0" y="11" font-family="Liberation Sans" font-size="12" fill="#a3a3a3">A</text><text x="0" y="27" font-family="Liberation Sans" font-size="12" fill="#a3a3a3">Z</text>
<path d="M9 9 L25 9 L19 17 L19 25 L16 23 L16 17 Z" fill="#a3a3a3"/></svg>
<div class="t" style="left:1207.00px;top:94px;font-weight:400;font-size:11.5px;line-height:11.5px;font-family:'Liberation Sans';color:#a3a3a3;">Classificar</div>
<div class="t" style="left:1210.00px;top:110px;font-weight:400;font-size:11.5px;line-height:11.5px;font-family:'Liberation Sans';color:#a3a3a3;letter-spacing:-0.125px;">e Filtrar</div>
<svg style="position:absolute;left:1251px;top:114px;" width="7" height="4" viewBox="0 0 7 4"><path d="M0 0.5 L6 0.5 L3 3 Z" fill="#bdbdbd"/></svg>
<svg style="position:absolute;left:1282px;top:59px;" width="28" height="26" viewBox="0 0 28 26"><rect x="2" y="3" width="4" height="6" fill="#555"/><rect x="19" y="3" width="4" height="6" fill="#555"/>
<path d="M0.5 11 L3 8 L10 8 L10 24 L0.5 24 Z" fill="#555"/><path d="M24.5 11 L22 8 L15 8 L15 24 L24.5 24 Z" fill="#555"/><rect x="9" y="9" width="7" height="6" fill="#555"/>
<path d="M3 13v9M6 13v9M18 13v9M21 13v9" stroke="#888"/></svg>
<div class="t" style="left:1268.00px;top:94px;font-weight:400;font-size:11.5px;line-height:11.5px;font-family:'Liberation Sans';color:#444444;letter-spacing:0.100px;">Localizar e</div>
<div class="t" style="left:1264.00px;top:110px;font-weight:400;font-size:11.5px;line-height:11.5px;font-family:'Liberation Sans';color:#444444;letter-spacing:-0.111px;">Selecionar</div>
<svg style="position:absolute;left:1320px;top:114px;" width="7" height="4" viewBox="0 0 7 4"><path d="M0 0.5 L6 0.5 L3 3 Z" fill="#555"/></svg>
<svg style="position:absolute;left:1347px;top:131px;" width="10" height="6" viewBox="0 0 10 6"><path d="M0.5 5.5 L5 1 L9.5 5.5" fill="none" stroke="#555" stroke-width="1.5"/></svg>
<div style="left:5px;top:153px;width:102px;height:26px;background:#fff;box-shadow:inset 0 0 0 1px #c6c6c6;"></div>
<div class="t" style="left:12.00px;top:161px;font-weight:400;font-size:12.5px;line-height:12.5px;font-family:'Liberation Sans';color:#222;transform:scaleX(0.9633);letter-spacing:-0.600px;">C21</div>
<svg style="position:absolute;left:91px;top:164px;" width="9" height="5" viewBox="0 0 9 5"><path d="M0.5 0.5 L8 0.5 L4.25 4.5 Z" fill="#777"/></svg>
<svg style="position:absolute;left:120px;top:159px;" width="4" height="14" viewBox="0 0 4 14"><rect x="0.5" y="1" width="2" height="2" fill="#888"/><rect x="0.5" y="6" width="2" height="2" fill="#888"/><rect x="0.5" y="11" width="2" height="2" fill="#888"/></svg>
<div style="left:137px;top:153px;width:110px;height:26px;background:#fff;box-shadow:inset 0 0 0 1px #c6c6c6;"></div>
<svg style="position:absolute;left:146px;top:157px;" width="90" height="20" viewBox="0 0 90 20"><path d="M1.5 2 L14 16 M14 2 L1.5 16" stroke="#c6c6c6" stroke-width="2.2"/>
<path d="M37 10 L42 15.5 L51 3" fill="none" stroke="#c6c6c6" stroke-width="3"/></svg>
<div class="t" style="left:218.00px;top:157px;font-weight:700;font-size:19px;line-height:19px;font-family:'Liberation Serif';color:#6a6a6a;font-style:italic;transform:scaleX(1.2133);">fx</div>
<div style="left:250px;top:153px;width:1111px;height:26px;background:#fff;box-shadow:inset 0 0 0 1px #c6c6c6;"></div>
<div class="t" style="left:262.00px;top:161px;font-weight:400;font-size:12.5px;line-height:12.5px;font-family:'Liberation Sans';color:#222;transform:scaleX(0.9701);letter-spacing:-0.600px;">80</div>
<svg style="position:absolute;left:1343px;top:163px;" width="14" height="9" viewBox="0 0 14 9"><path d="M1 1.5 L7 7 L13 1.5" fill="none" stroke="#666" stroke-width="2.5"/></svg>
<div style="left:0px;top:187px;width:1344px;height:18px;background:#fff;"></div>
<svg style="position:absolute;left:12px;top:192px;" width="11" height="11" viewBox="0 0 11 11"><path d="M10 0.5 L10 10 L0.5 10 Z" fill="#dfdfdf"/></svg>
<div style="left:236px;top:189px;width:100px;height:16px;background:#e1e1e1;"></div>
<div style="left:236px;top:203px;width:100px;height:2px;background:#217346;"></div>
<div style="left:25px;top:189px;width:1px;height:16px;background:#d6d6d6;"></div>
<div style="left:42px;top:189px;width:1px;height:16px;background:#d6d6d6;"></div>
<div style="left:236px;top:189px;width:1px;height:16px;background:#d6d6d6;"></div>
<div style="left:335px;top:189px;width:1px;height:16px;background:#d6d6d6;"></div>
<div style="left:415px;top:189px;width:1px;height:16px;background:#d6d6d6;"></div>
<div style="left:473px;top:189px;width:1px;height:16px;background:#d6d6d6;"></div>
<div style="left:679px;top:189px;width:1px;height:16px;background:#d6d6d6;"></div>
<div style="left:737px;top:189px;width:1px;height:16px;background:#d6d6d6;"></div>
<div style="left:795px;top:189px;width:1px;height:16px;background:#d6d6d6;"></div>
<div style="left:853px;top:189px;width:1px;height:16px;background:#d6d6d6;"></div>
<div style="left:939px;top:189px;width:1px;height:16px;background:#d6d6d6;"></div>
<div style="left:1216px;top:189px;width:1px;height:16px;background:#d6d6d6;"></div>
<div style="left:1296px;top:189px;width:1px;height:16px;background:#d6d6d6;"></div>
<div style="left:0px;top:205px;width:1344px;height:1px;background:#c8c8c8;"></div>
<div class="t" style="left:29.70px;top:191px;font-weight:400;font-size:12px;line-height:12px;font-family:'Liberation Sans';color:#444;transform:scaleX(0.9500);">A</div>
<div class="t" style="left:134.73px;top:191px;font-weight:400;font-size:12px;line-height:12px;font-family:'Liberation Sans';color:#444;transform:scaleX(0.9500);">B</div>
<div class="t" style="left:281.70px;top:191px;font-weight:400;font-size:12px;line-height:12px;font-family:'Liberation Sans';color:#217346;transform:scaleX(0.9500);">C</div>
<div class="t" style="left:370.73px;top:191px;font-weight:400;font-size:12px;line-height:12px;font-family:'Liberation Sans';color:#444;transform:scaleX(0.9500);">D</div>
<div class="t" style="left:439.73px;top:191px;font-weight:400;font-size:12px;line-height:12px;font-family:'Liberation Sans';color:#444;transform:scaleX(0.9500);">E</div>
<div class="t" style="left:572.20px;top:191px;font-weight:400;font-size:12px;line-height:12px;font-family:'Liberation Sans';color:#444;transform:scaleX(0.9500);">F</div>
<div class="t" style="left:703.73px;top:191px;font-weight:400;font-size:12px;line-height:12px;font-family:'Liberation Sans';color:#444;transform:scaleX(0.9500);">G</div>
<div class="t" style="left:761.72px;top:191px;font-weight:400;font-size:12px;line-height:12px;font-family:'Liberation Sans';color:#444;transform:scaleX(0.9500);">H</div>
<div class="t" style="left:822.57px;top:191px;font-weight:400;font-size:12px;line-height:12px;font-family:'Liberation Sans';color:#444;transform:scaleX(0.9500);">I</div>
<div class="t" style="left:893.62px;top:191px;font-weight:400;font-size:12px;line-height:12px;font-family:'Liberation Sans';color:#444;transform:scaleX(0.9500);">J</div>
<div class="t" style="left:1073.22px;top:191px;font-weight:400;font-size:12px;line-height:12px;font-family:'Liberation Sans';color:#444;transform:scaleX(0.9500);">K</div>
<div class="t" style="left:1252.20px;top:191px;font-weight:400;font-size:12px;line-height:12px;font-family:'Liberation Sans';color:#444;transform:scaleX(0.9500);">L</div>
<div class="t" style="left:1320.25px;top:191px;font-weight:400;font-size:12px;line-height:12px;font-family:'Liberation Sans';color:#444;transform:scaleX(0.9500);">M</div>
<div style="left:0px;top:490px;width:25px;height:19px;background:#e1e1e1;"></div>
<div style="left:0px;top:243px;width:25px;height:1px;background:#e3e3e3;"></div>
<div style="left:0px;top:262px;width:25px;height:1px;background:#e3e3e3;"></div>
<div style="left:0px;top:281px;width:25px;height:1px;background:#e3e3e3;"></div>
<div style="left:0px;top:300px;width:25px;height:1px;background:#e3e3e3;"></div>
<div style="left:0px;top:319px;width:25px;height:1px;background:#e3e3e3;"></div>
<div style="left:0px;top:338px;width:25px;height:1px;background:#e3e3e3;"></div>
<div style="left:0px;top:357px;width:25px;height:1px;background:#e3e3e3;"></div>
<div style="left:0px;top:376px;width:25px;height:1px;background:#e3e3e3;"></div>
<div style="left:0px;top:395px;width:25px;height:1px;background:#e3e3e3;"></div>
<div style="left:0px;top:414px;width:25px;height:1px;background:#e3e3e3;"></div>
<div style="left:0px;top:433px;width:25px;height:1px;background:#e3e3e3;"></div>
<div style="left:0px;top:452px;width:25px;height:1px;background:#e3e3e3;"></div>
<div style="left:0px;top:471px;width:25px;height:1px;background:#e3e3e3;"></div>
<div style="left:0px;top:490px;width:25px;height:1px;background:#e3e3e3;"></div>
<div style="left:0px;top:509px;width:25px;height:1px;background:#e3e3e3;"></div>
<div style="left:0px;top:528px;width:25px;height:1px;background:#e3e3e3;"></div>
<div style="left:0px;top:547px;width:25px;height:1px;background:#e3e3e3;"></div>
<div style="left:0px;top:566px;width:25px;height:1px;background:#e3e3e3;"></div>
<div style="left:0px;top:584px;width:25px;height:1px;background:#e3e3e3;"></div>
<div style="left:0px;top:602px;width:25px;height:1px;background:#e3e3e3;"></div>
<div style="left:0px;top:620px;width:25px;height:1px;background:#e3e3e3;"></div>
<div style="left:0px;top:638px;width:25px;height:1px;background:#e3e3e3;"></div>
<div style="left:0px;top:656px;width:25px;height:1px;background:#e3e3e3;"></div>
<div style="left:0px;top:674px;width:25px;height:1px;background:#e3e3e3;"></div>
<div style="left:25px;top:205px;width:1px;height:473px;background:#b0b0b0;"></div>
<div style="left:24px;top:490px;width:2px;height:20px;background:#217346;"></div>
<div class="t" style="left:9.65px;top:229px;font-weight:400;font-size:12px;line-height:12px;font-family:'Liberation Sans';color:#444;transform:scaleX(0.9500);">7</div>
<div class="t" style="left:9.65px;top:248px;font-weight:400;font-size:12px;line-height:12px;font-family:'Liberation Sans';color:#444;transform:scaleX(0.9500);">8</div>
<div class="t" style="left:9.65px;top:267px;font-weight:400;font-size:12px;line-height:12px;font-family:'Liberation Sans';color:#444;transform:scaleX(0.9500);">9</div>
<div class="t" style="left:5.85px;top:286px;font-weight:400;font-size:12px;line-height:12px;font-family:'Liberation Sans';color:#444;transform:scaleX(0.9500);">10</div>
<div class="t" style="left:6.33px;top:305px;font-weight:400;font-size:12px;line-height:12px;font-family:'Liberation Sans';color:#444;transform:scaleX(0.9500);">11</div>
<div class="t" style="left:5.85px;top:324px;font-weight:400;font-size:12px;line-height:12px;font-family:'Liberation Sans';color:#444;transform:scaleX(0.9500);">12</div>
<div class="t" style="left:5.85px;top:343px;font-weight:400;font-size:12px;line-height:12px;font-family:'Liberation Sans';color:#444;transform:scaleX(0.9500);">13</div>
<div class="t" style="left:5.85px;top:362px;font-weight:400;font-size:12px;line-height:12px;font-family:'Liberation Sans';color:#444;transform:scaleX(0.9500);">14</div>
<div class="t" style="left:5.85px;top:381px;font-weight:400;font-size:12px;line-height:12px;font-family:'Liberation Sans';color:#444;transform:scaleX(0.9500);">15</div>
<div class="t" style="left:5.85px;top:400px;font-weight:400;font-size:12px;line-height:12px;font-family:'Liberation Sans';color:#444;transform:scaleX(0.9500);">16</div>
<div class="t" style="left:5.85px;top:419px;font-weight:400;font-size:12px;line-height:12px;font-family:'Liberation Sans';color:#444;transform:scaleX(0.9500);">17</div>
<div class="t" style="left:5.85px;top:438px;font-weight:400;font-size:12px;line-height:12px;font-family:'Liberation Sans';color:#444;transform:scaleX(0.9500);">18</div>
<div class="t" style="left:5.85px;top:457px;font-weight:400;font-size:12px;line-height:12px;font-family:'Liberation Sans';color:#444;transform:scaleX(0.9500);">19</div>
<div class="t" style="left:6.33px;top:476px;font-weight:400;font-size:12px;line-height:12px;font-family:'Liberation Sans';color:#444;transform:scaleX(0.9500);">20</div>
<div class="t" style="left:6.33px;top:495px;font-weight:400;font-size:12px;line-height:12px;font-family:'Liberation Sans';color:#217346;transform:scaleX(0.9500);">21</div>
<div class="t" style="left:6.33px;top:514px;font-weight:400;font-size:12px;line-height:12px;font-family:'Liberation Sans';color:#444;transform:scaleX(0.9500);">22</div>
<div class="t" style="left:6.33px;top:533px;font-weight:400;font-size:12px;line-height:12px;font-family:'Liberation Sans';color:#444;transform:scaleX(0.9500);">23</div>
<div class="t" style="left:6.33px;top:552px;font-weight:400;font-size:12px;line-height:12px;font-family:'Liberation Sans';color:#444;transform:scaleX(0.9500);">24</div>
<div class="t" style="left:6.33px;top:570px;font-weight:400;font-size:12px;line-height:12px;font-family:'Liberation Sans';color:#444;transform:scaleX(0.9500);">25</div>
<div class="t" style="left:6.33px;top:588px;font-weight:400;font-size:12px;line-height:12px;font-family:'Liberation Sans';color:#444;transform:scaleX(0.9500);">26</div>
<div class="t" style="left:6.33px;top:606px;font-weight:400;font-size:12px;line-height:12px;font-family:'Liberation Sans';color:#444;transform:scaleX(0.9500);">27</div>
<div class="t" style="left:6.33px;top:624px;font-weight:400;font-size:12px;line-height:12px;font-family:'Liberation Sans';color:#444;transform:scaleX(0.9500);">28</div>
<div class="t" style="left:6.33px;top:642px;font-weight:400;font-size:12px;line-height:12px;font-family:'Liberation Sans';color:#444;transform:scaleX(0.9500);">29</div>
<div class="t" style="left:6.33px;top:660px;font-weight:400;font-size:12px;line-height:12px;font-family:'Liberation Sans';color:#444;transform:scaleX(0.9500);">30</div>
<div style="left:1344px;top:205px;width:1px;height:473px;background:#ababab;"></div>
<div style="left:0px;top:678px;width:1345px;height:1px;background:#ababab;"></div>
<div style="left:43px;top:206px;width:372px;height:37px;background:#5b9bd5;"></div>
<div style="left:43px;top:244px;width:372px;height:18px;background:#bdd7ee;"></div>
<div style="left:43px;top:263px;width:193px;height:18px;background:#f2f2f2;"></div>
<div style="left:237px;top:263px;width:178px;height:18px;background:#fff;"></div>
<div style="left:43px;top:282px;width:193px;height:18px;background:#f2f2f2;"></div>
<div style="left:237px;top:282px;width:178px;height:18px;background:#fff;"></div>
<div style="left:43px;top:301px;width:193px;height:18px;background:#f2f2f2;"></div>
<div style="left:237px;top:301px;width:178px;height:18px;background:#fff;"></div>
<div style="left:43px;top:320px;width:193px;height:18px;background:#f2f2f2;"></div>
<div style="left:336px;top:320px;width:79px;height:18px;background:#f2f2f2;"></div>
<div style="left:43px;top:339px;width:193px;height:18px;background:#f2f2f2;"></div>
<div style="left:336px;top:339px;width:79px;height:18px;background:#f2f2f2;"></div>
<div style="left:43px;top:358px;width:193px;height:18px;background:#f2f2f2;"></div>
<div style="left:336px;top:358px;width:79px;height:18px;background:#f2f2f2;"></div>
<div style="left:43px;top:377px;width:193px;height:18px;background:#f2f2f2;"></div>
<div style="left:336px;top:377px;width:79px;height:18px;background:#f2f2f2;"></div>
<div style="left:43px;top:396px;width:193px;height:18px;background:#f2f2f2;"></div>
<div style="left:336px;top:396px;width:79px;height:18px;background:#f2f2f2;"></div>
<div style="left:43px;top:415px;width:372px;height:18px;background:#bdd7ee;"></div>
<div style="left:43px;top:472px;width:372px;height:18px;background:#bdd7ee;"></div>
<div style="left:43px;top:434px;width:193px;height:18px;background:#f2f2f2;"></div>
<div style="left:336px;top:434px;width:79px;height:18px;background:#f2f2f2;"></div>
<div style="left:43px;top:453px;width:193px;height:18px;background:#f2f2f2;"></div>
<div style="left:336px;top:453px;width:79px;height:18px;background:#f2f2f2;"></div>
<div style="left:43px;top:491px;width:193px;height:18px;background:#f2f2f2;"></div>
<div style="left:336px;top:491px;width:79px;height:18px;background:#f2f2f2;"></div>
<div style="left:43px;top:510px;width:193px;height:18px;background:#f2f2f2;"></div>
<div style="left:336px;top:510px;width:79px;height:18px;background:#f2f2f2;"></div>
<div style="left:43px;top:529px;width:193px;height:18px;background:#f2f2f2;"></div>
<div style="left:336px;top:529px;width:79px;height:18px;background:#f2f2f2;"></div>
<div style="left:42px;top:281px;width:374px;height:1px;background:#000;"></div>
<div style="left:42px;top:300px;width:374px;height:1px;background:#000;"></div>
<div style="left:42px;top:319px;width:374px;height:1px;background:#000;"></div>
<div style="left:42px;top:338px;width:374px;height:1px;background:#000;"></div>
<div style="left:42px;top:357px;width:374px;height:1px;background:#000;"></div>
<div style="left:42px;top:376px;width:374px;height:1px;background:#000;"></div>
<div style="left:42px;top:395px;width:374px;height:1px;background:#000;"></div>
<div style="left:42px;top:452px;width:374px;height:1px;background:#000;"></div>
<div style="left:42px;top:509px;width:374px;height:1px;background:#000;"></div>
<div style="left:42px;top:528px;width:374px;height:1px;background:#000;"></div>
<div style="left:236px;top:262px;width:1px;height:153px;background:#000;"></div>
<div style="left:335px;top:319px;width:1px;height:96px;background:#000;"></div>
<div style="left:236px;top:433px;width:1px;height:39px;background:#000;"></div>
<div style="left:335px;top:433px;width:1px;height:39px;background:#000;"></div>
<div style="left:236px;top:490px;width:1px;height:58px;background:#000;"></div>
<div style="left:335px;top:490px;width:1px;height:58px;background:#000;"></div>
<div style="left:41px;top:242px;width:375px;height:2px;background:#000;"></div>
<div style="left:41px;top:261px;width:375px;height:2px;background:#000;"></div>
<div style="left:41px;top:413px;width:375px;height:2px;background:#000;"></div>
<div style="left:41px;top:432px;width:375px;height:2px;background:#000;"></div>
<div style="left:41px;top:470px;width:375px;height:2px;background:#000;"></div>
<div style="left:41px;top:489px;width:375px;height:2px;background:#000;"></div>
<div style="left:41px;top:546px;width:375px;height:2px;background:#000;"></div>
<div style="left:41px;top:206px;width:2px;height:342px;background:#000;"></div>
<div style="left:414px;top:206px;width:2px;height:342px;background:#000;"></div>
<svg style="position:absolute;left:231px;top:263px;" width="5" height="5" viewBox="0 0 5 5"><path d="M0 0 L5 0 L5 5 Z" fill="#f00"/></svg>
<svg style="position:absolute;left:231px;top:282px;" width="5" height="5" viewBox="0 0 5 5"><path d="M0 0 L5 0 L5 5 Z" fill="#f00"/></svg>
<svg style="position:absolute;left:231px;top:301px;" width="5" height="5" viewBox="0 0 5 5"><path d="M0 0 L5 0 L5 5 Z" fill="#f00"/></svg>
<svg style="position:absolute;left:231px;top:320px;" width="5" height="5" viewBox="0 0 5 5"><path d="M0 0 L5 0 L5 5 Z" fill="#f00"/></svg>
<svg style="position:absolute;left:231px;top:339px;" width="5" height="5" viewBox="0 0 5 5"><path d="M0 0 L5 0 L5 5 Z" fill="#f00"/></svg>
<svg style="position:absolute;left:231px;top:358px;" width="5" height="5" viewBox="0 0 5 5"><path d="M0 0 L5 0 L5 5 Z" fill="#f00"/></svg>
<svg style="position:absolute;left:231px;top:377px;" width="5" height="5" viewBox="0 0 5 5"><path d="M0 0 L5 0 L5 5 Z" fill="#f00"/></svg>
<svg style="position:absolute;left:231px;top:396px;" width="5" height="5" viewBox="0 0 5 5"><path d="M0 0 L5 0 L5 5 Z" fill="#f00"/></svg>
<svg style="position:absolute;left:231px;top:434px;" width="5" height="5" viewBox="0 0 5 5"><path d="M0 0 L5 0 L5 5 Z" fill="#f00"/></svg>
<svg style="position:absolute;left:231px;top:453px;" width="5" height="5" viewBox="0 0 5 5"><path d="M0 0 L5 0 L5 5 Z" fill="#f00"/></svg>
<svg style="position:absolute;left:231px;top:491px;" width="5" height="5" viewBox="0 0 5 5"><path d="M0 0 L5 0 L5 5 Z" fill="#f00"/></svg>
<svg style="position:absolute;left:231px;top:510px;" width="5" height="5" viewBox="0 0 5 5"><path d="M0 0 L5 0 L5 5 Z" fill="#f00"/></svg>
<svg style="position:absolute;left:231px;top:529px;" width="5" height="5" viewBox="0 0 5 5"><path d="M0 0 L5 0 L5 5 Z" fill="#f00"/></svg>
<svg style="position:absolute;left:409px;top:244px;" width="5" height="5" viewBox="0 0 5 5"><path d="M0 0 L5 0 L5 5 Z" fill="#f00"/></svg>
<svg style="position:absolute;left:409px;top:415px;" width="5" height="5" viewBox="0 0 5 5"><path d="M0 0 L5 0 L5 5 Z" fill="#f00"/></svg>
<svg style="position:absolute;left:409px;top:472px;" width="5" height="5" viewBox="0 0 5 5"><path d="M0 0 L5 0 L5 5 Z" fill="#f00"/></svg>
<div class="t" style="left:162.05px;top:217px;font-weight:700;font-size:15px;line-height:15px;font-family:'Liberation Sans';color:#000;transform:scaleX(1.0548);">Entrada de dados</div>
<div class="t" style="left:189.18px;top:246px;font-weight:700;font-size:12px;line-height:12px;font-family:'Liberation Sans';color:#000;transform:scaleX(0.9709);">Fossa séptica</div>
<div class="t" style="left:180.65px;top:417px;font-weight:700;font-size:12px;line-height:12px;font-family:'Liberation Sans';color:#000;transform:scaleX(1.0517);">Filtro anaeróbio</div>
<div class="t" style="left:195.70px;top:474px;font-weight:700;font-size:12px;line-height:12px;font-family:'Liberation Sans';color:#000;transform:scaleX(1.0413);">Sumidouro</div>
<div class="t" style="left:45.00px;top:268px;font-weight:400;font-size:11.5px;line-height:11.5px;font-family:'Liberation Sans';color:#000;letter-spacing:0.258px;">Tipo de fossa</div>
<div class="t" style="left:294.80px;top:268px;font-weight:400;font-size:11.5px;line-height:11.5px;font-family:'Liberation Sans';color:#000;letter-spacing:0.711px;">Prismática</div>
<div class="t" style="left:45.00px;top:287px;font-weight:400;font-size:11.5px;line-height:11.5px;font-family:'Liberation Sans';color:#000;letter-spacing:0.450px;">Tipo de edifício</div>
<div class="t" style="left:260.85px;top:287px;font-weight:400;font-size:11.5px;line-height:11.5px;font-family:'Liberation Sans';color:#000;letter-spacing:0.538px;">Residência padrão alto</div>
<div class="t" style="left:44.00px;top:306px;font-weight:400;font-size:11.5px;line-height:11.5px;font-family:'Liberation Sans';color:#000;letter-spacing:0.450px;">Nº de pessoas</div>
<div class="t" style="left:322.27px;top:306px;font-weight:400;font-size:11.5px;line-height:11.5px;font-family:'Liberation Sans';color:#000;letter-spacing:0.450px;">7</div>
<div class="t" style="left:44.00px;top:325px;font-weight:400;font-size:11.5px;line-height:11.5px;font-family:'Liberation Sans';color:#000;letter-spacing:0.478px;">Intervalo entre limpezas</div>
<div class="t" style="left:326.50px;top:325px;font-weight:400;font-size:11.5px;line-height:11.5px;font-family:'Liberation Sans';color:#000;letter-spacing:0.500px;">5</div>
<div class="t" style="left:338.00px;top:325px;font-weight:400;font-size:11.5px;line-height:11.5px;font-family:'Liberation Sans';color:#000;letter-spacing:0.450px;">Anos</div>
<div class="t" style="left:45.00px;top:344px;font-weight:400;font-size:11.5px;line-height:11.5px;font-family:'Liberation Sans';color:#000;letter-spacing:0.421px;">Temperatura ambiente</div>
<div class="t" style="left:319.50px;top:344px;font-weight:400;font-size:11.5px;line-height:11.5px;font-family:'Liberation Sans';color:#000;letter-spacing:0.500px;">17</div>
<div class="t" style="left:337.00px;top:344px;font-weight:400;font-size:11.5px;line-height:11.5px;font-family:'Liberation Sans';color:#000;letter-spacing:0.450px;">°C</div>
<div class="t" style="left:45.00px;top:363px;font-weight:400;font-size:11.5px;line-height:11.5px;font-family:'Liberation Sans';color:#000;letter-spacing:0.364px;">Comprimento interno (L)</div>
<div class="t" style="left:309.50px;top:363px;font-weight:400;font-size:11.5px;line-height:11.5px;font-family:'Liberation Sans';color:#000;letter-spacing:0.500px;">2,50</div>
<div class="t" style="left:337.00px;top:363px;font-weight:400;font-size:11.5px;line-height:11.5px;font-family:'Liberation Sans';color:#000;letter-spacing:0.450px;">m</div>
<div class="t" style="left:44.00px;top:382px;font-weight:400;font-size:11.5px;line-height:11.5px;font-family:'Liberation Sans';color:#000;letter-spacing:0.500px;">Largura interna (W)</div>
<div class="t" style="left:309.50px;top:382px;font-weight:400;font-size:11.5px;line-height:11.5px;font-family:'Liberation Sans';color:#000;letter-spacing:0.500px;">1,25</div>
<div class="t" style="left:337.00px;top:382px;font-weight:400;font-size:11.5px;line-height:11.5px;font-family:'Liberation Sans';color:#000;letter-spacing:0.450px;">m</div>
<div class="t" style="left:45.00px;top:401px;font-weight:400;font-size:11.5px;line-height:11.5px;font-family:'Liberation Sans';color:#000;letter-spacing:0.450px;">Altura útil (hu)</div>
<div class="t" style="left:309.50px;top:401px;font-weight:400;font-size:11.5px;line-height:11.5px;font-family:'Liberation Sans';color:#000;letter-spacing:0.500px;">1,20</div>
<div class="t" style="left:337.00px;top:401px;font-weight:400;font-size:11.5px;line-height:11.5px;font-family:'Liberation Sans';color:#000;letter-spacing:0.450px;">m</div>
<div class="t" style="left:44.00px;top:439px;font-weight:400;font-size:11.5px;line-height:11.5px;font-family:'Liberation Sans';color:#000;letter-spacing:0.450px;">Diâmetro interno (Di)</div>
<div class="t" style="left:309.50px;top:439px;font-weight:400;font-size:11.5px;line-height:11.5px;font-family:'Liberation Sans';color:#000;letter-spacing:0.500px;">1,50</div>
<div class="t" style="left:337.00px;top:439px;font-weight:400;font-size:11.5px;line-height:11.5px;font-family:'Liberation Sans';color:#000;letter-spacing:0.450px;">m</div>
<div class="t" style="left:45.00px;top:458px;font-weight:400;font-size:11.5px;line-height:11.5px;font-family:'Liberation Sans';color:#000;letter-spacing:0.450px;">Altura útil (hu)</div>
<div class="t" style="left:309.50px;top:458px;font-weight:400;font-size:11.5px;line-height:11.5px;font-family:'Liberation Sans';color:#000;letter-spacing:0.500px;">1,20</div>
<div class="t" style="left:337.00px;top:458px;font-weight:400;font-size:11.5px;line-height:11.5px;font-family:'Liberation Sans';color:#000;letter-spacing:0.450px;">m</div>
<div class="t" style="left:45.00px;top:496px;font-weight:400;font-size:11.5px;line-height:11.5px;font-family:'Liberation Sans';color:#000;letter-spacing:0.450px;">Taxa de percolação</div>
<div class="t" style="left:319.50px;top:496px;font-weight:400;font-size:11.5px;line-height:11.5px;font-family:'Liberation Sans';color:#000;letter-spacing:0.500px;">80</div>
<div class="t" style="left:337.00px;top:496px;font-weight:400;font-size:11.5px;line-height:11.5px;font-family:'Liberation Sans';color:#000;letter-spacing:0.450px;">min/m</div>
<div class="t" style="left:44.00px;top:515px;font-weight:400;font-size:11.5px;line-height:11.5px;font-family:'Liberation Sans';color:#000;letter-spacing:0.450px;">Diâmetro interno (Di)</div>
<div class="t" style="left:309.50px;top:515px;font-weight:400;font-size:11.5px;line-height:11.5px;font-family:'Liberation Sans';color:#000;letter-spacing:0.500px;">1,00</div>
<div class="t" style="left:337.00px;top:515px;font-weight:400;font-size:11.5px;line-height:11.5px;font-family:'Liberation Sans';color:#000;letter-spacing:0.450px;">m</div>
<div class="t" style="left:45.00px;top:534px;font-weight:400;font-size:11.5px;line-height:11.5px;font-family:'Liberation Sans';color:#000;letter-spacing:0.450px;">Altura útil (hu)</div>
<div class="t" style="left:309.50px;top:534px;font-weight:400;font-size:11.5px;line-height:11.5px;font-family:'Liberation Sans';color:#000;letter-spacing:0.500px;">2,30</div>
<div class="t" style="left:337.00px;top:534px;font-weight:400;font-size:11.5px;line-height:11.5px;font-family:'Liberation Sans';color:#000;letter-spacing:0.450px;">m</div>
<div style="left:235px;top:489px;width:102px;height:2px;background:#217346;"></div>
<div style="left:235px;top:509px;width:99px;height:2px;background:#217346;"></div>
<div style="left:235px;top:489px;width:2px;height:22px;background:#217346;"></div>
<div style="left:335px;top:489px;width:2px;height:17px;background:#217346;"></div>
<div style="left:333px;top:507px;width:5px;height:5px;background:#217346;"></div>
<div style="left:332px;top:506px;width:7px;height:1px;background:#fff;"></div>
<div style="left:332px;top:506px;width:1px;height:6px;background:#fff;"></div>
<div style="left:474px;top:339px;width:321px;height:37px;background:#5b9bd5;"></div>
<div style="left:474px;top:377px;width:321px;height:18px;background:#bdd7ee;"></div>
<div style="left:474px;top:434px;width:321px;height:18px;background:#bdd7ee;"></div>
<div style="left:474px;top:491px;width:321px;height:18px;background:#bdd7ee;"></div>
<div style="left:474px;top:396px;width:205px;height:18px;background:#f2f2f2;"></div>
<div style="left:738px;top:396px;width:57px;height:18px;background:#f2f2f2;"></div>
<div style="left:474px;top:415px;width:205px;height:18px;background:#f2f2f2;"></div>
<div style="left:738px;top:415px;width:57px;height:18px;background:#f2f2f2;"></div>
<div style="left:474px;top:453px;width:205px;height:18px;background:#f2f2f2;"></div>
<div style="left:738px;top:453px;width:57px;height:18px;background:#f2f2f2;"></div>
<div style="left:474px;top:472px;width:205px;height:18px;background:#f2f2f2;"></div>
<div style="left:738px;top:472px;width:57px;height:18px;background:#f2f2f2;"></div>
<div style="left:474px;top:510px;width:205px;height:18px;background:#f2f2f2;"></div>
<div style="left:738px;top:510px;width:57px;height:18px;background:#f2f2f2;"></div>
<div style="left:474px;top:529px;width:205px;height:18px;background:#f2f2f2;"></div>
<div style="left:738px;top:529px;width:57px;height:18px;background:#f2f2f2;"></div>
<div style="left:473px;top:414px;width:323px;height:1px;background:#000;"></div>
<div style="left:473px;top:471px;width:323px;height:1px;background:#000;"></div>
<div style="left:473px;top:528px;width:323px;height:1px;background:#000;"></div>
<div style="left:679px;top:395px;width:1px;height:39px;background:#000;"></div>
<div style="left:737px;top:395px;width:1px;height:39px;background:#000;"></div>
<div style="left:679px;top:452px;width:1px;height:39px;background:#000;"></div>
<div style="left:737px;top:452px;width:1px;height:39px;background:#000;"></div>
<div style="left:679px;top:509px;width:1px;height:39px;background:#000;"></div>
<div style="left:737px;top:509px;width:1px;height:39px;background:#000;"></div>
<div style="left:472px;top:337px;width:324px;height:2px;background:#000;"></div>
<div style="left:472px;top:375px;width:324px;height:2px;background:#000;"></div>
<div style="left:472px;top:394px;width:324px;height:2px;background:#000;"></div>
<div style="left:472px;top:432px;width:324px;height:2px;background:#000;"></div>
<div style="left:472px;top:451px;width:324px;height:2px;background:#000;"></div>
<div style="left:472px;top:489px;width:324px;height:2px;background:#000;"></div>
<div style="left:472px;top:508px;width:324px;height:2px;background:#000;"></div>
<div style="left:472px;top:546px;width:324px;height:2px;background:#000;"></div>
<div style="left:472px;top:337px;width:2px;height:211px;background:#000;"></div>
<div style="left:794px;top:337px;width:2px;height:211px;background:#000;"></div>
<svg style="position:absolute;left:674px;top:396px;" width="5" height="5" viewBox="0 0 5 5"><path d="M0 0 L5 0 L5 5 Z" fill="#f00"/></svg>
<svg style="position:absolute;left:674px;top:415px;" width="5" height="5" viewBox="0 0 5 5"><path d="M0 0 L5 0 L5 5 Z" fill="#f00"/></svg>
<svg style="position:absolute;left:674px;top:453px;" width="5" height="5" viewBox="0 0 5 5"><path d="M0 0 L5 0 L5 5 Z" fill="#f00"/></svg>
<svg style="position:absolute;left:674px;top:472px;" width="5" height="5" viewBox="0 0 5 5"><path d="M0 0 L5 0 L5 5 Z" fill="#f00"/></svg>
<svg style="position:absolute;left:674px;top:510px;" width="5" height="5" viewBox="0 0 5 5"><path d="M0 0 L5 0 L5 5 Z" fill="#f00"/></svg>
<svg style="position:absolute;left:674px;top:529px;" width="5" height="5" viewBox="0 0 5 5"><path d="M0 0 L5 0 L5 5 Z" fill="#f00"/></svg>
<div class="t" style="left:577.25px;top:349px;font-weight:700;font-size:15px;line-height:15px;font-family:'Liberation Sans';color:#000;transform:scaleX(1.0318);">Saída de dados</div>
<div class="t" style="left:594.53px;top:379px;font-weight:700;font-size:12px;line-height:12px;font-family:'Liberation Sans';color:#000;transform:scaleX(0.9747);">Fossa séptica</div>
<div class="t" style="left:586.15px;top:436px;font-weight:700;font-size:12px;line-height:12px;font-family:'Liberation Sans';color:#000;transform:scaleX(1.0517);">Filtro anaeróbio</div>
<div class="t" style="left:601.20px;top:493px;font-weight:700;font-size:12px;line-height:12px;font-family:'Liberation Sans';color:#000;transform:scaleX(1.0413);">Sumidouro</div>
<div class="t" style="left:476.00px;top:401px;font-weight:400;font-size:11.5px;line-height:11.5px;font-family:'Liberation Sans';color:#000;letter-spacing:0.505px;">Volume útil necessário</div>
<div class="t" style="left:711.30px;top:401px;font-weight:400;font-size:11.5px;line-height:11.5px;font-family:'Liberation Sans';color:#000;letter-spacing:0.567px;">3,70</div>
<div class="t" style="left:740.00px;top:401px;font-weight:400;font-size:11.5px;line-height:11.5px;font-family:'Liberation Sans';color:#000;letter-spacing:0.300px;">m³</div>
<div class="t" style="left:476.00px;top:420px;font-weight:400;font-size:11.5px;line-height:11.5px;font-family:'Liberation Sans';color:#000;letter-spacing:0.450px;">Volume útil adotado</div>
<div class="t" style="left:711.50px;top:420px;font-weight:400;font-size:11.5px;line-height:11.5px;font-family:'Liberation Sans';color:#000;letter-spacing:0.500px;">3,75</div>
<div class="t" style="left:740.00px;top:420px;font-weight:400;font-size:11.5px;line-height:11.5px;font-family:'Liberation Sans';color:#000;letter-spacing:0.300px;">m³</div>
<div class="t" style="left:476.00px;top:458px;font-weight:400;font-size:11.5px;line-height:11.5px;font-family:'Liberation Sans';color:#000;letter-spacing:0.505px;">Volume útil necessário</div>
<div class="t" style="left:711.50px;top:458px;font-weight:400;font-size:11.5px;line-height:11.5px;font-family:'Liberation Sans';color:#000;letter-spacing:0.500px;">1,70</div>
<div class="t" style="left:740.00px;top:458px;font-weight:400;font-size:11.5px;line-height:11.5px;font-family:'Liberation Sans';color:#000;letter-spacing:0.300px;">m³</div>
<div class="t" style="left:476.00px;top:477px;font-weight:400;font-size:11.5px;line-height:11.5px;font-family:'Liberation Sans';color:#000;letter-spacing:0.450px;">Volume útil adotado</div>
<div class="t" style="left:711.50px;top:477px;font-weight:400;font-size:11.5px;line-height:11.5px;font-family:'Liberation Sans';color:#000;letter-spacing:0.500px;">3,60</div>
<div class="t" style="left:740.00px;top:477px;font-weight:400;font-size:11.5px;line-height:11.5px;font-family:'Liberation Sans';color:#000;letter-spacing:0.300px;">m³</div>
<div class="t" style="left:476.00px;top:515px;font-weight:400;font-size:11.5px;line-height:11.5px;font-family:'Liberation Sans';color:#000;letter-spacing:0.450px;">Área de infiltração necessária</div>
<div class="t" style="left:711.50px;top:515px;font-weight:400;font-size:11.5px;line-height:11.5px;font-family:'Liberation Sans';color:#000;letter-spacing:0.500px;">5,00</div>
<div class="t" style="left:740.00px;top:515px;font-weight:400;font-size:11.5px;line-height:11.5px;font-family:'Liberation Sans';color:#000;letter-spacing:0.300px;">m²</div>
<div class="t" style="left:476.00px;top:534px;font-weight:400;font-size:11.5px;line-height:11.5px;font-family:'Liberation Sans';color:#000;letter-spacing:0.450px;">Área de infiltração adotada</div>
<div class="t" style="left:711.50px;top:534px;font-weight:400;font-size:11.5px;line-height:11.5px;font-family:'Liberation Sans';color:#000;letter-spacing:0.500px;">5,50</div>
<div class="t" style="left:740.00px;top:534px;font-weight:400;font-size:11.5px;line-height:11.5px;font-family:'Liberation Sans';color:#000;letter-spacing:0.300px;">m²</div>
<div style="left:854px;top:339px;width:442px;height:37px;background:#5b9bd5;"></div>
<div style="left:854px;top:377px;width:85px;height:75px;background:#bdd7ee;"></div>
<div style="left:854px;top:453px;width:85px;height:56px;background:#bdd7ee;"></div>
<div style="left:854px;top:510px;width:85px;height:37px;background:#bdd7ee;"></div>
<div style="left:940px;top:377px;width:276px;height:18px;background:#f2f2f2;"></div>
<div style="left:940px;top:396px;width:276px;height:18px;background:#f2f2f2;"></div>
<div style="left:940px;top:415px;width:276px;height:18px;background:#f2f2f2;"></div>
<div style="left:940px;top:434px;width:276px;height:18px;background:#f2f2f2;"></div>
<div style="left:940px;top:453px;width:276px;height:18px;background:#f2f2f2;"></div>
<div style="left:940px;top:472px;width:276px;height:18px;background:#f2f2f2;"></div>
<div style="left:940px;top:491px;width:276px;height:18px;background:#f2f2f2;"></div>
<div style="left:940px;top:510px;width:276px;height:18px;background:#f2f2f2;"></div>
<div style="left:940px;top:529px;width:276px;height:18px;background:#f2f2f2;"></div>
<div style="left:939px;top:395px;width:358px;height:1px;background:#000;"></div>
<div style="left:939px;top:414px;width:358px;height:1px;background:#000;"></div>
<div style="left:939px;top:433px;width:358px;height:1px;background:#000;"></div>
<div style="left:939px;top:471px;width:358px;height:1px;background:#000;"></div>
<div style="left:939px;top:490px;width:358px;height:1px;background:#000;"></div>
<div style="left:939px;top:528px;width:358px;height:1px;background:#000;"></div>
<div style="left:852px;top:337px;width:445px;height:2px;background:#000;"></div>
<div style="left:852px;top:375px;width:445px;height:2px;background:#000;"></div>
<div style="left:852px;top:451px;width:445px;height:2px;background:#000;"></div>
<div style="left:852px;top:508px;width:445px;height:2px;background:#000;"></div>
<div style="left:852px;top:546px;width:445px;height:2px;background:#000;"></div>
<div style="left:852px;top:337px;width:2px;height:211px;background:#000;"></div>
<div style="left:938px;top:375px;width:2px;height:173px;background:#000;"></div>
<div style="left:1215px;top:375px;width:2px;height:173px;background:#000;"></div>
<div style="left:1295px;top:337px;width:2px;height:211px;background:#000;"></div>
<svg style="position:absolute;left:1210px;top:377px;" width="5" height="5" viewBox="0 0 5 5"><path d="M0 0 L5 0 L5 5 Z" fill="#f00"/></svg>
<svg style="position:absolute;left:1210px;top:396px;" width="5" height="5" viewBox="0 0 5 5"><path d="M0 0 L5 0 L5 5 Z" fill="#f00"/></svg>
<svg style="position:absolute;left:1210px;top:415px;" width="5" height="5" viewBox="0 0 5 5"><path d="M0 0 L5 0 L5 5 Z" fill="#f00"/></svg>
<svg style="position:absolute;left:1210px;top:434px;" width="5" height="5" viewBox="0 0 5 5"><path d="M0 0 L5 0 L5 5 Z" fill="#f00"/></svg>
<svg style="position:absolute;left:1210px;top:453px;" width="5" height="5" viewBox="0 0 5 5"><path d="M0 0 L5 0 L5 5 Z" fill="#f00"/></svg>
<svg style="position:absolute;left:1210px;top:472px;" width="5" height="5" viewBox="0 0 5 5"><path d="M0 0 L5 0 L5 5 Z" fill="#f00"/></svg>
<svg style="position:absolute;left:1210px;top:491px;" width="5" height="5" viewBox="0 0 5 5"><path d="M0 0 L5 0 L5 5 Z" fill="#f00"/></svg>
<svg style="position:absolute;left:1210px;top:510px;" width="5" height="5" viewBox="0 0 5 5"><path d="M0 0 L5 0 L5 5 Z" fill="#f00"/></svg>
<svg style="position:absolute;left:1210px;top:529px;" width="5" height="5" viewBox="0 0 5 5"><path d="M0 0 L5 0 L5 5 Z" fill="#f00"/></svg>
<div class="t" style="left:1030.95px;top:349px;font-weight:700;font-size:15px;line-height:15px;font-family:'Liberation Sans';color:#000;transform:scaleX(1.0287);">Verificações</div>
<div class="t" style="left:879.06px;top:399px;font-weight:700;font-size:12px;line-height:12px;font-family:'Liberation Sans';color:#000;transform:scaleX(0.9412);">Fossa</div>
<div class="t" style="left:875.05px;top:418px;font-weight:700;font-size:12px;line-height:12px;font-family:'Liberation Sans';color:#000;">séptica</div>
<div class="t" style="left:880.50px;top:475px;font-weight:700;font-size:12px;line-height:12px;font-family:'Liberation Sans';color:#000;">Filtro</div>
<div class="t" style="left:867.50px;top:494px;font-weight:700;font-size:12px;line-height:12px;font-family:'Liberation Sans';color:#000;">anaeróbio</div>
<div class="t" style="left:864.50px;top:522px;font-weight:700;font-size:12px;line-height:12px;font-family:'Liberation Sans';color:#000;">Sumidouro</div>
<div class="t" style="left:972.55px;top:382px;font-weight:400;font-size:11.5px;line-height:11.5px;font-family:'Liberation Sans';color:#000;letter-spacing:0.510px;">Vol. útil adotado ≥ Vol. útil necessário</div>
<div class="t" style="left:1248.85px;top:382px;font-weight:400;font-size:11.5px;line-height:11.5px;font-family:'Liberation Sans';color:#000;transform:scaleX(0.9935);letter-spacing:-0.600px;">OK</div>
<div class="t" style="left:1000.00px;top:401px;font-weight:400;font-size:11.5px;line-height:11.5px;font-family:'Liberation Sans';color:#000;letter-spacing:0.385px;">Largura interna (W) ≥ 0,80m</div>
<div class="t" style="left:1248.85px;top:401px;font-weight:400;font-size:11.5px;line-height:11.5px;font-family:'Liberation Sans';color:#000;transform:scaleX(0.9935);letter-spacing:-0.600px;">OK</div>
<div class="t" style="left:1047.75px;top:420px;font-weight:400;font-size:11.5px;line-height:11.5px;font-family:'Liberation Sans';color:#000;letter-spacing:0.050px;">2 ≤ L/W ≤ 4</div>
<div class="t" style="left:1248.85px;top:420px;font-weight:400;font-size:11.5px;line-height:11.5px;font-family:'Liberation Sans';color:#000;transform:scaleX(0.9935);letter-spacing:-0.600px;">OK</div>
<div class="t" style="left:997.50px;top:439px;font-weight:400;font-size:11.5px;line-height:11.5px;font-family:'Liberation Sans';color:#000;letter-spacing:0.379px;">1,2m ≤ Altura útil (hu) ≤ 2,2m</div>
<div class="t" style="left:1248.85px;top:439px;font-weight:400;font-size:11.5px;line-height:11.5px;font-family:'Liberation Sans';color:#000;transform:scaleX(0.9935);letter-spacing:-0.600px;">OK</div>
<div class="t" style="left:972.55px;top:458px;font-weight:400;font-size:11.5px;line-height:11.5px;font-family:'Liberation Sans';color:#000;letter-spacing:0.510px;">Vol. útil adotado ≥ Vol. útil necessário</div>
<div class="t" style="left:1248.85px;top:458px;font-weight:400;font-size:11.5px;line-height:11.5px;font-family:'Liberation Sans';color:#000;transform:scaleX(0.9935);letter-spacing:-0.600px;">OK</div>
<div class="t" style="left:1013.90px;top:477px;font-weight:400;font-size:11.5px;line-height:11.5px;font-family:'Liberation Sans';color:#000;letter-spacing:0.600px;">Vol. útil adotado ≥ 1m³</div>
<div class="t" style="left:1248.85px;top:477px;font-weight:400;font-size:11.5px;line-height:11.5px;font-family:'Liberation Sans';color:#000;transform:scaleX(0.9935);letter-spacing:-0.600px;">OK</div>
<div class="t" style="left:1015.00px;top:496px;font-weight:400;font-size:11.5px;line-height:11.5px;font-family:'Liberation Sans';color:#000;letter-spacing:0.391px;">Altura útil (hu) ≥ 1,20m</div>
<div class="t" style="left:1248.85px;top:496px;font-weight:400;font-size:11.5px;line-height:11.5px;font-family:'Liberation Sans';color:#000;transform:scaleX(0.9935);letter-spacing:-0.600px;">OK</div>
<div class="t" style="left:958.20px;top:515px;font-weight:400;font-size:11.5px;line-height:11.5px;font-family:'Liberation Sans';color:#000;letter-spacing:0.436px;">Área infilt. adotada ≥ Área infilt. necessária</div>
<div class="t" style="left:1248.85px;top:515px;font-weight:400;font-size:11.5px;line-height:11.5px;font-family:'Liberation Sans';color:#000;transform:scaleX(0.9935);letter-spacing:-0.600px;">OK</div>
<div class="t" style="left:995.50px;top:534px;font-weight:400;font-size:11.5px;line-height:11.5px;font-family:'Liberation Sans';color:#000;letter-spacing:0.429px;">Diâmetro interno (Di) ≥ 1,00m</div>
<div class="t" style="left:1248.85px;top:534px;font-weight:400;font-size:11.5px;line-height:11.5px;font-family:'Liberation Sans';color:#000;transform:scaleX(0.9935);letter-spacing:-0.600px;">OK</div>
<svg style="position:absolute;left:540px;top:206px;" width="600" height="130" viewBox="0 0 600 130"><rect x="11" y="0" width="11" height="31" fill="#6b5a50"/><rect x="11" y="0" width="11" height="1.2" fill="#8a4a2a"/><rect x="12.0" y="1.8" width="2.2" height="1.6" fill="#e6e6e6"/><rect x="12.0" y="4.3" width="2.2" height="1.6" fill="#e6e6e6"/><rect x="15.4" y="1.8" width="2.2" height="1.6" fill="#e6e6e6"/><rect x="15.4" y="4.3" width="2.2" height="1.6" fill="#e6e6e6"/><rect x="18.8" y="1.8" width="2.2" height="1.6" fill="#e6e6e6"/><rect x="18.8" y="4.3" width="2.2" height="1.6" fill="#e6e6e6"/><rect x="11" y="7.699999999999989" width="11" height="1.2" fill="#8a4a2a"/><rect x="12.0" y="9.5" width="2.2" height="1.6" fill="#e6e6e6"/><rect x="12.0" y="12.0" width="2.2" height="1.6" fill="#e6e6e6"/><rect x="15.4" y="9.5" width="2.2" height="1.6" fill="#e6e6e6"/><rect x="15.4" y="12.0" width="2.2" height="1.6" fill="#e6e6e6"/><rect x="18.8" y="9.5" width="2.2" height="1.6" fill="#e6e6e6"/><rect x="18.8" y="12.0" width="2.2" height="1.6" fill="#e6e6e6"/><rect x="11" y="15.399999999999977" width="11" height="1.2" fill="#8a4a2a"/><rect x="12.0" y="17.2" width="2.2" height="1.6" fill="#e6e6e6"/><rect x="12.0" y="19.7" width="2.2" height="1.6" fill="#e6e6e6"/><rect x="15.4" y="17.2" width="2.2" height="1.6" fill="#e6e6e6"/><rect x="15.4" y="19.7" width="2.2" height="1.6" fill="#e6e6e6"/><rect x="18.8" y="17.2" width="2.2" height="1.6" fill="#e6e6e6"/><rect x="18.8" y="19.7" width="2.2" height="1.6" fill="#e6e6e6"/><rect x="11" y="23.099999999999966" width="11" height="1.2" fill="#8a4a2a"/><rect x="12.0" y="24.9" width="2.2" height="1.6" fill="#e6e6e6"/><rect x="12.0" y="27.4" width="2.2" height="1.6" fill="#e6e6e6"/><rect x="15.4" y="24.9" width="2.2" height="1.6" fill="#e6e6e6"/><rect x="15.4" y="27.4" width="2.2" height="1.6" fill="#e6e6e6"/><rect x="18.8" y="24.9" width="2.2" height="1.6" fill="#e6e6e6"/><rect x="18.8" y="27.4" width="2.2" height="1.6" fill="#e6e6e6"/><rect x="172" y="0" width="11" height="31" fill="#6b5a50"/><rect x="172" y="0" width="11" height="1.2" fill="#8a4a2a"/><rect x="173.0" y="1.8" width="2.2" height="1.6" fill="#e6e6e6"/><rect x="173.0" y="4.3" width="2.2" height="1.6" fill="#e6e6e6"/><rect x="176.4" y="1.8" width="2.2" height="1.6" fill="#e6e6e6"/><rect x="176.4" y="4.3" width="2.2" height="1.6" fill="#e6e6e6"/><rect x="179.8" y="1.8" width="2.2" height="1.6" fill="#e6e6e6"/><rect x="179.8" y="4.3" width="2.2" height="1.6" fill="#e6e6e6"/><rect x="172" y="7.699999999999989" width="11" height="1.2" fill="#8a4a2a"/><rect x="173.0" y="9.5" width="2.2" height="1.6" fill="#e6e6e6"/><rect x="173.0" y="12.0" width="2.2" height="1.6" fill="#e6e6e6"/><rect x="176.4" y="9.5" width="2.2" height="1.6" fill="#e6e6e6"/><rect x="176.4" y="12.0" width="2.2" height="1.6" fill="#e6e6e6"/><rect x="179.8" y="9.5" width="2.2" height="1.6" fill="#e6e6e6"/><rect x="179.8" y="12.0" width="2.2" height="1.6" fill="#e6e6e6"/><rect x="172" y="15.399999999999977" width="11" height="1.2" fill="#8a4a2a"/><rect x="173.0" y="17.2" width="2.2" height="1.6" fill="#e6e6e6"/><rect x="173.0" y="19.7" width="2.2" height="1.6" fill="#e6e6e6"/><rect x="176.4" y="17.2" width="2.2" height="1.6" fill="#e6e6e6"/><rect x="176.4" y="19.7" width="2.2" height="1.6" fill="#e6e6e6"/><rect x="179.8" y="17.2" width="2.2" height="1.6" fill="#e6e6e6"/><rect x="179.8" y="19.7" width="2.2" height="1.6" fill="#e6e6e6"/><rect x="172" y="23.099999999999966" width="11" height="1.2" fill="#8a4a2a"/><rect x="173.0" y="24.9" width="2.2" height="1.6" fill="#e6e6e6"/><rect x="173.0" y="27.4" width="2.2" height="1.6" fill="#e6e6e6"/><rect x="176.4" y="24.9" width="2.2" height="1.6" fill="#e6e6e6"/><rect x="176.4" y="27.4" width="2.2" height="1.6" fill="#e6e6e6"/><rect x="179.8" y="24.9" width="2.2" height="1.6" fill="#e6e6e6"/><rect x="179.8" y="27.4" width="2.2" height="1.6" fill="#e6e6e6"/><path d="M11 31 h11 v5.5 h-11 z" fill="#cacaca" stroke="#9a9a9a" stroke-width="0.8"/><path d="M171 31 h12 v5.5 h-12 z" fill="#cacaca" stroke="#9a9a9a" stroke-width="0.8"/><rect x="5.5" y="36.5" width="183" height="7" rx="1.5" fill="#cacaca" stroke="#9a9a9a" stroke-width="1"/><path d="M79 0 V37" stroke="#8a8a8a" stroke-width="1"/><rect x="91.5" y="-1" width="11" height="7.5" fill="#fff" stroke="#9a9a9a" stroke-width="1"/><path d="M22 51.5 H171 M22 46 V54 M171 46 V54" stroke="#555" stroke-width="1"/><text x="92" y="64" font-family="Liberation Sans" font-size="12" fill="#333">L</text><text x="257" y="5.5" font-family="Liberation Sans" font-size="11" fill="#333">h</text><text x="263.5" y="7" font-family="Liberation Sans" font-size="8" fill="#333">u</text><path d="M272.5 0 V37 M269 37.5 H280" stroke="#777" stroke-width="1"/><rect x="291" y="0" width="113" height="6.5" fill="#d5d5d5" stroke="#888" stroke-width="0.8"/><rect x="305" y="1.5" width="2.8" height="4" fill="#fff" stroke="#888" stroke-width="0.5"/><rect x="310" y="1.5" width="2.8" height="4" fill="#fff" stroke="#888" stroke-width="0.5"/><rect x="315" y="1.5" width="2.8" height="4" fill="#fff" stroke="#888" stroke-width="0.5"/><rect x="320" y="1.5" width="2.8" height="4" fill="#fff" stroke="#888" stroke-width="0.5"/><rect x="340" y="1.5" width="2.8" height="4" fill="#fff" stroke="#888" stroke-width="0.5"/><rect x="345" y="1.5" width="2.8" height="4" fill="#fff" stroke="#888" stroke-width="0.5"/><rect x="350" y="1.5" width="2.8" height="4" fill="#fff" stroke="#888" stroke-width="0.5"/><rect x="355" y="1.5" width="2.8" height="4" fill="#fff" stroke="#888" stroke-width="0.5"/><rect x="375" y="1.5" width="2.8" height="4" fill="#fff" stroke="#888" stroke-width="0.5"/><rect x="380" y="1.5" width="2.8" height="4" fill="#fff" stroke="#888" stroke-width="0.5"/><rect x="385" y="1.5" width="2.8" height="4" fill="#fff" stroke="#888" stroke-width="0.5"/><rect x="390" y="1.5" width="2.8" height="4" fill="#fff" stroke="#888" stroke-width="0.5"/><rect x="291" y="7" width="12" height="24" fill="#6b5a50"/><rect x="291" y="7" width="12" height="1.2" fill="#8a4a2a"/><rect x="292.0" y="8.8" width="2.2" height="1.6" fill="#e6e6e6"/><rect x="292.0" y="11.3" width="2.2" height="1.6" fill="#e6e6e6"/><rect x="295.4" y="8.8" width="2.2" height="1.6" fill="#e6e6e6"/><rect x="295.4" y="11.3" width="2.2" height="1.6" fill="#e6e6e6"/><rect x="298.8" y="8.8" width="2.2" height="1.6" fill="#e6e6e6"/><rect x="298.8" y="11.3" width="2.2" height="1.6" fill="#e6e6e6"/><rect x="291" y="14.699999999999989" width="12" height="1.2" fill="#8a4a2a"/><rect x="292.0" y="16.5" width="2.2" height="1.6" fill="#e6e6e6"/><rect x="292.0" y="19.0" width="2.2" height="1.6" fill="#e6e6e6"/><rect x="295.4" y="16.5" width="2.2" height="1.6" fill="#e6e6e6"/><rect x="295.4" y="19.0" width="2.2" height="1.6" fill="#e6e6e6"/><rect x="298.8" y="16.5" width="2.2" height="1.6" fill="#e6e6e6"/><rect x="298.8" y="19.0" width="2.2" height="1.6" fill="#e6e6e6"/><rect x="291" y="22.399999999999977" width="12" height="1.2" fill="#8a4a2a"/><rect x="292.0" y="24.2" width="2.2" height="1.6" fill="#e6e6e6"/><rect x="292.0" y="26.7" width="2.2" height="1.6" fill="#e6e6e6"/><rect x="295.4" y="24.2" width="2.2" height="1.6" fill="#e6e6e6"/><rect x="295.4" y="26.7" width="2.2" height="1.6" fill="#e6e6e6"/><rect x="298.8" y="24.2" width="2.2" height="1.6" fill="#e6e6e6"/><rect x="298.8" y="26.7" width="2.2" height="1.6" fill="#e6e6e6"/><rect x="393" y="7" width="11" height="24" fill="#6b5a50"/><rect x="393" y="7" width="11" height="1.2" fill="#8a4a2a"/><rect x="394.0" y="8.8" width="2.2" height="1.6" fill="#e6e6e6"/><rect x="394.0" y="11.3" width="2.2" height="1.6" fill="#e6e6e6"/><rect x="397.4" y="8.8" width="2.2" height="1.6" fill="#e6e6e6"/><rect x="397.4" y="11.3" width="2.2" height="1.6" fill="#e6e6e6"/><rect x="400.8" y="8.8" width="2.2" height="1.6" fill="#e6e6e6"/><rect x="400.8" y="11.3" width="2.2" height="1.6" fill="#e6e6e6"/><rect x="393" y="14.699999999999989" width="11" height="1.2" fill="#8a4a2a"/><rect x="394.0" y="16.5" width="2.2" height="1.6" fill="#e6e6e6"/><rect x="394.0" y="19.0" width="2.2" height="1.6" fill="#e6e6e6"/><rect x="397.4" y="16.5" width="2.2" height="1.6" fill="#e6e6e6"/><rect x="397.4" y="19.0" width="2.2" height="1.6" fill="#e6e6e6"/><rect x="400.8" y="16.5" width="2.2" height="1.6" fill="#e6e6e6"/><rect x="400.8" y="19.0" width="2.2" height="1.6" fill="#e6e6e6"/><rect x="393" y="22.399999999999977" width="11" height="1.2" fill="#8a4a2a"/><rect x="394.0" y="24.2" width="2.2" height="1.6" fill="#e6e6e6"/><rect x="394.0" y="26.7" width="2.2" height="1.6" fill="#e6e6e6"/><rect x="397.4" y="24.2" width="2.2" height="1.6" fill="#e6e6e6"/><rect x="397.4" y="26.7" width="2.2" height="1.6" fill="#e6e6e6"/><rect x="400.8" y="24.2" width="2.2" height="1.6" fill="#e6e6e6"/><rect x="400.8" y="26.7" width="2.2" height="1.6" fill="#e6e6e6"/><rect x="324.5" y="0" width="8.5" height="19" fill="#fff" stroke="#999" stroke-width="1"/><rect x="360.5" y="0" width="11.5" height="13" fill="#fff" stroke="#999" stroke-width="1"/><path d="M291 31 h12 v5.5 h-12 z" fill="#cacaca" stroke="#9a9a9a" stroke-width="0.8"/><path d="M392 31 h12 v5.5 h-12 z" fill="#cacaca" stroke="#9a9a9a" stroke-width="0.8"/><rect x="284.5" y="36.5" width="125.5" height="7" rx="1.5" fill="#cacaca" stroke="#9a9a9a" stroke-width="1"/><path d="M303 51.5 H393 M303 46 V54 M393 46 V54" stroke="#555" stroke-width="1"/><text x="342.5" y="65" font-family="Liberation Sans" font-size="12" fill="#333">D</text><text x="351.5" y="67" font-family="Liberation Sans" font-size="8" fill="#333">i</text><path d="M498 0 V99 M496 98.5 H505" stroke="#888" stroke-width="1"/><text x="482.5" y="37" font-family="Liberation Sans" font-size="12" fill="#333">h</text><text x="489" y="39" font-family="Liberation Sans" font-size="8.5" fill="#333">u</text><rect x="507.5" y="0" width="11.5" height="99" fill="#9a9a9a"/><rect x="508.0" y="0.5" width="10.5" height="4" fill="#e8792c"/><rect x="508.0" y="6.6" width="10.5" height="4" fill="#e8792c"/><rect x="508.0" y="12.7" width="10.5" height="4" fill="#e8792c"/><rect x="508.0" y="18.8" width="10.5" height="4" fill="#e8792c"/><rect x="508.0" y="24.9" width="10.5" height="4" fill="#e8792c"/><rect x="508.0" y="31.0" width="10.5" height="4" fill="#e8792c"/><rect x="508.0" y="37.1" width="10.5" height="4" fill="#e8792c"/><rect x="508.0" y="43.2" width="10.5" height="4" fill="#e8792c"/><rect x="508.0" y="49.3" width="10.5" height="4" fill="#e8792c"/><rect x="508.0" y="55.4" width="10.5" height="4" fill="#e8792c"/><rect x="508.0" y="61.5" width="10.5" height="4" fill="#e8792c"/><rect x="508.0" y="67.6" width="10.5" height="4" fill="#e8792c"/><rect x="508.0" y="73.7" width="10.5" height="4" fill="#e8792c"/><rect x="508.0" y="79.8" width="10.5" height="4" fill="#e8792c"/><rect x="508.0" y="85.9" width="10.5" height="4" fill="#e8792c"/><rect x="508.0" y="92.0" width="10.5" height="4" fill="#e8792c"/><rect x="508.0" y="6" width="10.5" height="11" fill="#cbcbcb"/><rect x="508.0" y="87" width="10.5" height="11.5" fill="#cbcbcb"/><rect x="577.5" y="0" width="11.5" height="99" fill="#9a9a9a"/><rect x="578.0" y="0.5" width="10.5" height="4" fill="#e8792c"/><rect x="578.0" y="6.6" width="10.5" height="4" fill="#e8792c"/><rect x="578.0" y="12.7" width="10.5" height="4" fill="#e8792c"/><rect x="578.0" y="18.8" width="10.5" height="4" fill="#e8792c"/><rect x="578.0" y="24.9" width="10.5" height="4" fill="#e8792c"/><rect x="578.0" y="31.0" width="10.5" height="4" fill="#e8792c"/><rect x="578.0" y="37.1" width="10.5" height="4" fill="#e8792c"/><rect x="578.0" y="43.2" width="10.5" height="4" fill="#e8792c"/><rect x="578.0" y="49.3" width="10.5" height="4" fill="#e8792c"/><rect x="578.0" y="55.4" width="10.5" height="4" fill="#e8792c"/><rect x="578.0" y="61.5" width="10.5" height="4" fill="#e8792c"/><rect x="578.0" y="67.6" width="10.5" height="4" fill="#e8792c"/><rect x="578.0" y="73.7" width="10.5" height="4" fill="#e8792c"/><rect x="578.0" y="79.8" width="10.5" height="4" fill="#e8792c"/><rect x="578.0" y="85.9" width="10.5" height="4" fill="#e8792c"/><rect x="578.0" y="92.0" width="10.5" height="4" fill="#e8792c"/><rect x="578.0" y="6" width="10.5" height="11" fill="#cbcbcb"/><rect x="578.0" y="87" width="10.5" height="11.5" fill="#cbcbcb"/><rect x="519" y="0" width="58.5" height="82" fill="#fff"/><circle cx="526.5" cy="7" r="1.3" fill="#d0d0d0" stroke="#9a9a9a" stroke-width="0.6"/><circle cx="533.5" cy="7" r="1.3" fill="#d0d0d0" stroke="#9a9a9a" stroke-width="0.6"/><circle cx="540.5" cy="7" r="1.3" fill="#d0d0d0" stroke="#9a9a9a" stroke-width="0.6"/><circle cx="547.5" cy="7" r="1.3" fill="#d0d0d0" stroke="#9a9a9a" stroke-width="0.6"/><circle cx="554.5" cy="7" r="1.3" fill="#d0d0d0" stroke="#9a9a9a" stroke-width="0.6"/><circle cx="561.5" cy="7" r="1.3" fill="#d0d0d0" stroke="#9a9a9a" stroke-width="0.6"/><circle cx="568.5" cy="7" r="1.3" fill="#d0d0d0" stroke="#9a9a9a" stroke-width="0.6"/><circle cx="523" cy="14" r="1.3" fill="#d0d0d0" stroke="#9a9a9a" stroke-width="0.6"/><circle cx="530" cy="14" r="1.3" fill="#d0d0d0" stroke="#9a9a9a" stroke-width="0.6"/><circle cx="537" cy="14" r="1.3" fill="#d0d0d0" stroke="#9a9a9a" stroke-width="0.6"/><circle cx="544" cy="14" r="1.3" fill="#d0d0d0" stroke="#9a9a9a" stroke-width="0.6"/><circle cx="551" cy="14" r="1.3" fill="#d0d0d0" stroke="#9a9a9a" stroke-width="0.6"/><circle cx="558" cy="14" r="1.3" fill="#d0d0d0" stroke="#9a9a9a" stroke-width="0.6"/><circle cx="565" cy="14" r="1.3" fill="#d0d0d0" stroke="#9a9a9a" stroke-width="0.6"/><circle cx="572" cy="14" r="1.3" fill="#d0d0d0" stroke="#9a9a9a" stroke-width="0.6"/><circle cx="526.5" cy="21" r="1.3" fill="#d0d0d0" stroke="#9a9a9a" stroke-width="0.6"/><circle cx="533.5" cy="21" r="1.3" fill="#d0d0d0" stroke="#9a9a9a" stroke-width="0.6"/><circle cx="540.5" cy="21" r="1.3" fill="#d0d0d0" stroke="#9a9a9a" stroke-width="0.6"/><circle cx="547.5" cy="21" r="1.3" fill="#d0d0d0" stroke="#9a9a9a" stroke-width="0.6"/><circle cx="554.5" cy="21" r="1.3" fill="#d0d0d0" stroke="#9a9a9a" stroke-width="0.6"/><circle cx="561.5" cy="21" r="1.3" fill="#d0d0d0" stroke="#9a9a9a" stroke-width="0.6"/><circle cx="568.5" cy="21" r="1.3" fill="#d0d0d0" stroke="#9a9a9a" stroke-width="0.6"/><circle cx="523" cy="28" r="1.3" fill="#d0d0d0" stroke="#9a9a9a" stroke-width="0.6"/><circle cx="530" cy="28" r="1.3" fill="#d0d0d0" stroke="#9a9a9a" stroke-width="0.6"/><circle cx="537" cy="28" r="1.3" fill="#d0d0d0" stroke="#9a9a9a" stroke-width="0.6"/><circle cx="544" cy="28" r="1.3" fill="#d0d0d0" stroke="#9a9a9a" stroke-width="0.6"/><circle cx="551" cy="28" r="1.3" fill="#d0d0d0" stroke="#9a9a9a" stroke-width="0.6"/><circle cx="558" cy="28" r="1.3" fill="#d0d0d0" stroke="#9a9a9a" stroke-width="0.6"/><circle cx="565" cy="28" r="1.3" fill="#d0d0d0" stroke="#9a9a9a" stroke-width="0.6"/><circle cx="572" cy="28" r="1.3" fill="#d0d0d0" stroke="#9a9a9a" stroke-width="0.6"/><circle cx="526.5" cy="35" r="1.3" fill="#d0d0d0" stroke="#9a9a9a" stroke-width="0.6"/><circle cx="533.5" cy="35" r="1.3" fill="#d0d0d0" stroke="#9a9a9a" stroke-width="0.6"/><circle cx="540.5" cy="35" r="1.3" fill="#d0d0d0" stroke="#9a9a9a" stroke-width="0.6"/><circle cx="547.5" cy="35" r="1.3" fill="#d0d0d0" stroke="#9a9a9a" stroke-width="0.6"/><circle cx="554.5" cy="35" r="1.3" fill="#d0d0d0" stroke="#9a9a9a" stroke-width="0.6"/><circle cx="561.5" cy="35" r="1.3" fill="#d0d0d0" stroke="#9a9a9a" stroke-width="0.6"/><circle cx="568.5" cy="35" r="1.3" fill="#d0d0d0" stroke="#9a9a9a" stroke-width="0.6"/><circle cx="523" cy="42" r="1.3" fill="#d0d0d0" stroke="#9a9a9a" stroke-width="0.6"/><circle cx="530" cy="42" r="1.3" fill="#d0d0d0" stroke="#9a9a9a" stroke-width="0.6"/><circle cx="537" cy="42" r="1.3" fill="#d0d0d0" stroke="#9a9a9a" stroke-width="0.6"/><circle cx="544" cy="42" r="1.3" fill="#d0d0d0" stroke="#9a9a9a" stroke-width="0.6"/><circle cx="551" cy="42" r="1.3" fill="#d0d0d0" stroke="#9a9a9a" stroke-width="0.6"/><circle cx="558" cy="42" r="1.3" fill="#d0d0d0" stroke="#9a9a9a" stroke-width="0.6"/><circle cx="565" cy="42" r="1.3" fill="#d0d0d0" stroke="#9a9a9a" stroke-width="0.6"/><circle cx="572" cy="42" r="1.3" fill="#d0d0d0" stroke="#9a9a9a" stroke-width="0.6"/><circle cx="526.5" cy="49" r="1.3" fill="#d0d0d0" stroke="#9a9a9a" stroke-width="0.6"/><circle cx="533.5" cy="49" r="1.3" fill="#d0d0d0" stroke="#9a9a9a" stroke-width="0.6"/><circle cx="540.5" cy="49" r="1.3" fill="#d0d0d0" stroke="#9a9a9a" stroke-width="0.6"/><circle cx="547.5" cy="49" r="1.3" fill="#d0d0d0" stroke="#9a9a9a" stroke-width="0.6"/><circle cx="554.5" cy="49" r="1.3" fill="#d0d0d0" stroke="#9a9a9a" stroke-width="0.6"/><circle cx="561.5" cy="49" r="1.3" fill="#d0d0d0" stroke="#9a9a9a" stroke-width="0.6"/><circle cx="568.5" cy="49" r="1.3" fill="#d0d0d0" stroke="#9a9a9a" stroke-width="0.6"/><circle cx="523" cy="56" r="1.3" fill="#d0d0d0" stroke="#9a9a9a" stroke-width="0.6"/><circle cx="530" cy="56" r="1.3" fill="#d0d0d0" stroke="#9a9a9a" stroke-width="0.6"/><circle cx="537" cy="56" r="1.3" fill="#d0d0d0" stroke="#9a9a9a" stroke-width="0.6"/><circle cx="544" cy="56" r="1.3" fill="#d0d0d0" stroke="#9a9a9a" stroke-width="0.6"/><circle cx="551" cy="56" r="1.3" fill="#d0d0d0" stroke="#9a9a9a" stroke-width="0.6"/><circle cx="558" cy="56" r="1.3" fill="#d0d0d0" stroke="#9a9a9a" stroke-width="0.6"/><circle cx="565" cy="56" r="1.3" fill="#d0d0d0" stroke="#9a9a9a" stroke-width="0.6"/><circle cx="572" cy="56" r="1.3" fill="#d0d0d0" stroke="#9a9a9a" stroke-width="0.6"/><circle cx="526.5" cy="63" r="1.3" fill="#d0d0d0" stroke="#9a9a9a" stroke-width="0.6"/><circle cx="533.5" cy="63" r="1.3" fill="#d0d0d0" stroke="#9a9a9a" stroke-width="0.6"/><circle cx="540.5" cy="63" r="1.3" fill="#d0d0d0" stroke="#9a9a9a" stroke-width="0.6"/><circle cx="547.5" cy="63" r="1.3" fill="#d0d0d0" stroke="#9a9a9a" stroke-width="0.6"/><circle cx="554.5" cy="63" r="1.3" fill="#d0d0d0" stroke="#9a9a9a" stroke-width="0.6"/><circle cx="561.5" cy="63" r="1.3" fill="#d0d0d0" stroke="#9a9a9a" stroke-width="0.6"/><circle cx="568.5" cy="63" r="1.3" fill="#d0d0d0" stroke="#9a9a9a" stroke-width="0.6"/><circle cx="523" cy="70" r="1.3" fill="#d0d0d0" stroke="#9a9a9a" stroke-width="0.6"/><circle cx="530" cy="70" r="1.3" fill="#d0d0d0" stroke="#9a9a9a" stroke-width="0.6"/><circle cx="537" cy="70" r="1.3" fill="#d0d0d0" stroke="#9a9a9a" stroke-width="0.6"/><circle cx="544" cy="70" r="1.3" fill="#d0d0d0" stroke="#9a9a9a" stroke-width="0.6"/><circle cx="551" cy="70" r="1.3" fill="#d0d0d0" stroke="#9a9a9a" stroke-width="0.6"/><circle cx="558" cy="70" r="1.3" fill="#d0d0d0" stroke="#9a9a9a" stroke-width="0.6"/><circle cx="565" cy="70" r="1.3" fill="#d0d0d0" stroke="#9a9a9a" stroke-width="0.6"/><circle cx="572" cy="70" r="1.3" fill="#d0d0d0" stroke="#9a9a9a" stroke-width="0.6"/><circle cx="526.5" cy="77" r="1.3" fill="#d0d0d0" stroke="#9a9a9a" stroke-width="0.6"/><circle cx="533.5" cy="77" r="1.3" fill="#d0d0d0" stroke="#9a9a9a" stroke-width="0.6"/><circle cx="540.5" cy="77" r="1.3" fill="#d0d0d0" stroke="#9a9a9a" stroke-width="0.6"/><circle cx="547.5" cy="77" r="1.3" fill="#d0d0d0" stroke="#9a9a9a" stroke-width="0.6"/><circle cx="554.5" cy="77" r="1.3" fill="#d0d0d0" stroke="#9a9a9a" stroke-width="0.6"/><circle cx="561.5" cy="77" r="1.3" fill="#d0d0d0" stroke="#9a9a9a" stroke-width="0.6"/><circle cx="568.5" cy="77" r="1.3" fill="#d0d0d0" stroke="#9a9a9a" stroke-width="0.6"/><circle cx="523" cy="84" r="1.3" fill="#d0d0d0" stroke="#9a9a9a" stroke-width="0.6"/><circle cx="530" cy="84" r="1.3" fill="#d0d0d0" stroke="#9a9a9a" stroke-width="0.6"/><circle cx="537" cy="84" r="1.3" fill="#d0d0d0" stroke="#9a9a9a" stroke-width="0.6"/><circle cx="544" cy="84" r="1.3" fill="#d0d0d0" stroke="#9a9a9a" stroke-width="0.6"/><circle cx="551" cy="84" r="1.3" fill="#d0d0d0" stroke="#9a9a9a" stroke-width="0.6"/><circle cx="558" cy="84" r="1.3" fill="#d0d0d0" stroke="#9a9a9a" stroke-width="0.6"/><circle cx="565" cy="84" r="1.3" fill="#d0d0d0" stroke="#9a9a9a" stroke-width="0.6"/><circle cx="572" cy="84" r="1.3" fill="#d0d0d0" stroke="#9a9a9a" stroke-width="0.6"/><rect x="536" y="74" width="25" height="8" fill="#fff"/><text x="538.5" y="81" font-family="Liberation Sans" font-size="7" fill="#777">BRITA</text><rect x="519" y="82" width="58.5" height="17" fill="#8a8a8a"/><clipPath id="hc"><rect x="519" y="82" width="58.5" height="17"/></clipPath><g clip-path="url(#hc)"><path d="M519 82 l-17 17" stroke="#333" stroke-width="0.9"/><path d="M522 82 l-17 17" stroke="#333" stroke-width="0.9"/><path d="M525 82 l-17 17" stroke="#333" stroke-width="0.9"/><path d="M528 82 l-17 17" stroke="#333" stroke-width="0.9"/><path d="M531 82 l-17 17" stroke="#333" stroke-width="0.9"/><path d="M534 82 l-17 17" stroke="#333" stroke-width="0.9"/><path d="M537 82 l-17 17" stroke="#333" stroke-width="0.9"/><path d="M540 82 l-17 17" stroke="#333" stroke-width="0.9"/><path d="M543 82 l-17 17" stroke="#333" stroke-width="0.9"/><path d="M546 82 l-17 17" stroke="#333" stroke-width="0.9"/><path d="M549 82 l-17 17" stroke="#333" stroke-width="0.9"/><path d="M552 82 l-17 17" stroke="#333" stroke-width="0.9"/><path d="M555 82 l-17 17" stroke="#333" stroke-width="0.9"/><path d="M558 82 l-17 17" stroke="#333" stroke-width="0.9"/><path d="M561 82 l-17 17" stroke="#333" stroke-width="0.9"/><path d="M564 82 l-17 17" stroke="#333" stroke-width="0.9"/><path d="M567 82 l-17 17" stroke="#333" stroke-width="0.9"/><path d="M570 82 l-17 17" stroke="#333" stroke-width="0.9"/><path d="M573 82 l-17 17" stroke="#333" stroke-width="0.9"/><path d="M576 82 l-17 17" stroke="#333" stroke-width="0.9"/><path d="M579 82 l-17 17" stroke="#333" stroke-width="0.9"/><path d="M582 82 l-17 17" stroke="#333" stroke-width="0.9"/><path d="M585 82 l-17 17" stroke="#333" stroke-width="0.9"/><path d="M588 82 l-17 17" stroke="#333" stroke-width="0.9"/><path d="M591 82 l-17 17" stroke="#333" stroke-width="0.9"/><path d="M594 82 l-17 17" stroke="#333" stroke-width="0.9"/><path d="M501 82 l17 17" stroke="#ddd" stroke-width="0.6"/><path d="M504 82 l17 17" stroke="#ddd" stroke-width="0.6"/><path d="M507 82 l17 17" stroke="#ddd" stroke-width="0.6"/><path d="M510 82 l17 17" stroke="#ddd" stroke-width="0.6"/><path d="M513 82 l17 17" stroke="#ddd" stroke-width="0.6"/><path d="M516 82 l17 17" stroke="#ddd" stroke-width="0.6"/><path d="M519 82 l17 17" stroke="#ddd" stroke-width="0.6"/><path d="M522 82 l17 17" stroke="#ddd" stroke-width="0.6"/><path d="M525 82 l17 17" stroke="#ddd" stroke-width="0.6"/><path d="M528 82 l17 17" stroke="#ddd" stroke-width="0.6"/><path d="M531 82 l17 17" stroke="#ddd" stroke-width="0.6"/><path d="M534 82 l17 17" stroke="#ddd" stroke-width="0.6"/><path d="M537 82 l17 17" stroke="#ddd" stroke-width="0.6"/><path d="M540 82 l17 17" stroke="#ddd" stroke-width="0.6"/><path d="M543 82 l17 17" stroke="#ddd" stroke-width="0.6"/><path d="M546 82 l17 17" stroke="#ddd" stroke-width="0.6"/><path d="M549 82 l17 17" stroke="#ddd" stroke-width="0.6"/><path d="M552 82 l17 17" stroke="#ddd" stroke-width="0.6"/><path d="M555 82 l17 17" stroke="#ddd" stroke-width="0.6"/><path d="M558 82 l17 17" stroke="#ddd" stroke-width="0.6"/><path d="M561 82 l17 17" stroke="#ddd" stroke-width="0.6"/><path d="M564 82 l17 17" stroke="#ddd" stroke-width="0.6"/><path d="M567 82 l17 17" stroke="#ddd" stroke-width="0.6"/><path d="M570 82 l17 17" stroke="#ddd" stroke-width="0.6"/><path d="M573 82 l17 17" stroke="#ddd" stroke-width="0.6"/><path d="M576 82 l17 17" stroke="#ddd" stroke-width="0.6"/></g><path d="M519 108 H577 M519 103 V111 M577 103 V111" stroke="#555" stroke-width="1"/><text x="542.5" y="121" font-family="Liberation Sans" font-size="12" fill="#333">D</text><text x="551.5" y="123.5" font-family="Liberation Sans" font-size="8" fill="#333">i</text></svg>
<svg style="position:absolute;left:676px;top:460px;" width="20" height="16" viewBox="0 0 20 16"><path d="M17 3 L6 11" stroke="#000" stroke-width="1"/><path d="M3 12 L8.5 7.5 L9.5 12.5 Z" fill="#000"/></svg>
<div style="left:693px;top:462px;width:382px;height:157px;background:#ffffe1;border:1px solid #222"></div>
<div class="t" style="left:696.50px;top:492px;font-weight:700;font-size:12px;line-height:12px;font-family:'Liberation Sans';color:#111;transform:scaleX(0.9660);">O volume útil adotado para o filtro anaeróbio é igual a área interna</div>
<div class="t" style="left:696.50px;top:509px;font-weight:700;font-size:12px;line-height:12px;font-family:'Liberation Sans';color:#111;transform:scaleX(0.9485);">da base multiplicada pela altura útil hu (Ver ilustração). Esse volume</div>
<div class="t" style="left:696.50px;top:525px;font-weight:700;font-size:12px;line-height:12px;font-family:'Liberation Sans';color:#111;transform:scaleX(0.9391);">foi calculado com as dimensões informadas na &quot;Entrada de dados&quot;</div>
<div class="t" style="left:696.50px;top:559px;font-weight:700;font-size:12px;line-height:12px;font-family:'Liberation Sans';color:#111;transform:scaleX(0.9641);">OBS.: O volume útil do filtro anaeróbio corresponde a parte com</div>
<div class="t" style="left:695.54px;top:576px;font-weight:700;font-size:12px;line-height:12px;font-family:'Liberation Sans';color:#111;transform:scaleX(0.9571);">brita + a câmara vazia, incluindo a laje com furos (Ver ilustração)</div>
<div style="left:1345px;top:187px;width:21px;height:491px;background:#fff;"></div>
<div style="left:1348px;top:206px;width:15px;height:472px;background:#f3f3f3;"></div>
<div style="left:1348px;top:191px;width:15px;height:15px;background:#fff;box-shadow:inset 0 0 0 1px #ababab;"></div>
<svg style="position:absolute;left:1351px;top:196px;" width="9" height="5" viewBox="0 0 9 5"><path d="M0.5 4.5 L4.5 0.5 L8.5 4.5 Z" fill="#777"/></svg>
<div style="left:1348px;top:213px;width:15px;height:30px;background:#fff;box-shadow:inset 0 0 0 1px #ababab;"></div>
<div style="left:1346px;top:678px;width:19px;height:3px;background:#fff;"></div>
<div style="left:1348px;top:664px;width:15px;height:15px;background:#fff;box-shadow:inset 0 0 0 1px #ababab;"></div>
<svg style="position:absolute;left:1351px;top:669px;" width="9" height="5" viewBox="0 0 9 5"><path d="M0.5 0.5 L8.5 0.5 L4.5 4.5 Z" fill="#777"/></svg>
<div style="left:0px;top:679px;width:1366px;height:27px;background:#f5f5f5;"></div>
<div style="left:0px;top:678px;width:1345px;height:1px;background:#ababab;"></div>
<svg style="position:absolute;left:25px;top:686px;" width="40" height="12" viewBox="0 0 40 12"><path d="M6.5 1.5 L2 6 L6.5 10.5 Z" fill="#bdbdbd"/><path d="M31 1.5 L35.5 6 L31 10.5 Z" fill="#bdbdbd"/></svg>
<div style="left:100px;top:678px;width:183px;height:25px;background:#fff;"></div>
<div style="left:100px;top:678px;width:1px;height:25px;background:#ababab;"></div>
<div style="left:282px;top:678px;width:1px;height:25px;background:#ababab;"></div>
<div style="left:101px;top:701px;width:181px;height:2px;background:#217346;"></div>
<div class="t" style="left:111.70px;top:685px;font-weight:700;font-size:13px;line-height:13px;font-family:'Liberation Sans';color:#217346;letter-spacing:-0.050px;">Fossa, Filtro e Sumidouro</div>
<div class="t" style="left:296.00px;top:685px;font-weight:400;font-size:13px;line-height:13px;font-family:'Liberation Sans';color:#444;letter-spacing:0.222px;">Memorial de Cálculo</div>
<div style="left:432px;top:682px;width:1px;height:20px;background:#b5b5b5;"></div>
<svg style="position:absolute;left:465px;top:683px;" width="18" height="18" viewBox="0 0 18 18"><circle cx="9" cy="9" r="7.5" fill="none" stroke="#777" stroke-width="1.2"/><path d="M9 5v8M5 9h8" stroke="#777" stroke-width="1.4"/></svg>
<svg style="position:absolute;left:818px;top:685px;" width="5" height="14" viewBox="0 0 5 14"><rect x="1" y="1" width="2" height="2" fill="#999"/><rect x="1" y="6" width="2" height="2" fill="#999"/><rect x="1" y="11" width="2" height="2" fill="#999"/></svg>
<div style="left:836px;top:685px;width:508px;height:15px;background:#e8e8e8;"></div>
<div style="left:836px;top:685px;width:15px;height:15px;background:#fff;box-shadow:inset 0 0 0 1px #ababab;"></div>
<svg style="position:absolute;left:840px;top:688px;" width="6" height="9" viewBox="0 0 6 9"><path d="M5 0.5 L0.5 4.5 L5 8.5 Z" fill="#555"/></svg>
<div style="left:850px;top:685px;width:99px;height:15px;background:#fff;box-shadow:inset 0 0 0 1px #ababab;"></div>
<div style="left:1330px;top:685px;width:15px;height:15px;background:#fff;box-shadow:inset 0 0 0 1px #ababab;"></div>
<svg style="position:absolute;left:1335px;top:688px;" width="6" height="9" viewBox="0 0 6 9"><path d="M0.5 0.5 L5 4.5 L0.5 8.5 Z" fill="#555"/></svg>
<div style="left:0px;top:706px;width:1366px;height:22px;background:#217346;"></div>
<div class="t" style="left:7.00px;top:712px;font-weight:400;font-size:11.5px;line-height:11.5px;font-family:'Liberation Sans';color:#fff;letter-spacing:-0.069px;">Célula F20 comentada por Pedro</div>
<div style="left:1081px;top:706px;width:37px;height:22px;background:#19603a;"></div>
<svg style="position:absolute;left:1090px;top:709px;" width="100" height="16" viewBox="0 0 100 16"><rect x="2.5" y="1.5" width="13" height="12" fill="none" stroke="#fff"/><path d="M2.5 5.5h13M2.5 9.5h13M6.5 1.5v12M11.5 1.5v12" stroke="#fff"/>
<rect x="40.5" y="1.5" width="13" height="12" fill="none" stroke="#fff"/><rect x="43.5" y="4.5" width="7" height="6" fill="none" stroke="#fff"/><path d="M45 6.5h4M45 8.5h4" stroke="#fff"/>
<rect x="78.5" y="1.5" width="13" height="12" fill="none" stroke="#fff"/><rect x="78" y="1" width="6" height="7" fill="#fff"/><rect x="86" y="1" width="6" height="7" fill="#fff"/></svg>
<svg style="position:absolute;left:1196px;top:710px;" width="130" height="14" viewBox="0 0 130 14"><rect x="1" y="6.5" width="7" height="1.5" fill="#fff"/>
<rect x="13" y="6.5" width="99" height="1" fill="#fff"/>
<rect x="57" y="1" width="4" height="12" fill="#fff"/><rect x="64" y="4" width="1" height="6" fill="#fff"/>
<rect x="116" y="6.2" width="9" height="1.8" fill="#fff"/><rect x="119.6" y="2.5" width="1.8" height="9" fill="#fff"/></svg>
<div class="t" style="left:1337.00px;top:711px;font-weight:400;font-size:12px;line-height:12px;font-family:'Liberation Sans';color:#fff;transform:scaleX(0.9211);letter-spacing:-0.600px;">90%</div>
<div style="left:0;top:728px;width:1366px;height:40px;background:linear-gradient(90deg,#e9e4ac 0px,#e9e3b6 60px,#e9e1cc 335px,#e9e0d2 450px,#e8dfd2 660px,#e6e1c6 740px,#e2e1b6 820px,#e2e2b3 950px,#e6e5b2 1150px,#e9e6b1 1366px)"></div>
<svg style="position:absolute;left:16px;top:740px;" width="17" height="17" viewBox="0 0 17 17"><path d="M0 2.2 L7 1.2 V7.8 H0 Z M8.2 1 L16.5 0 V7.8 H8.2 Z M0 9 H7 V15.6 L0 14.6 Z M8.2 9 H16.5 V16.8 L8.2 15.8 Z" fill="#111"/></svg>
<div style="left:48px;top:728px;width:287px;height:40px;background:#c9c9c9;"></div>
<div style="left:49px;top:729px;width:286px;height:39px;background:#fff;"></div>
<svg style="position:absolute;left:58px;top:739px;" width="20" height="20" viewBox="0 0 20 20"><circle cx="11.5" cy="7.5" r="6" fill="none" stroke="#222" stroke-width="1.5"/><path d="M7.3 11.7 L1.5 17.5" stroke="#222" stroke-width="1.7"/></svg>
<div class="t" style="left:87.00px;top:742px;font-weight:400;font-size:14px;line-height:14px;font-family:'Liberation Sans';color:#222;">Pesquisar</div>
<svg style="position:absolute;left:250px;top:728px;" width="86" height="40" viewBox="0 0 86 40"><defs><linearGradient id="fy" x1="0" y1="0" x2="0" y2="1"><stop offset="0" stop-color="#ffd24a"/><stop offset="1" stop-color="#f0a810"/></linearGradient>
<linearGradient id="fp" x1="0" y1="0" x2="1" y2="1"><stop offset="0" stop-color="#a07ad0"/><stop offset="1" stop-color="#5f3a98"/></linearGradient></defs>
<ellipse cx="46" cy="45" rx="44" ry="12" fill="#6f9a58"/>
<path d="M20 18 q-4 -4 -5 -7" stroke="#6cb040" stroke-width="1.6" fill="none"/>
<path d="M21 19 q-6 3 -5 10 q1 7 7 8 q6 -1 8 -6 q1 -6 -5 -10 q-2 -1 -5 -2z" fill="url(#fp)"/>
<path d="M40 40 v-10" stroke="#3f9a35" stroke-width="2.4"/><path d="M56 40 v-14" stroke="#3f9a35" stroke-width="2.8"/>
<path d="M33 30 q6 8 9 0 M36 32 q6 4 11 -4" stroke="#58b040" stroke-width="1.8" fill="none"/>
<path d="M50 30 q-4 -2 -6 -8 M62 30 q4 -2 8 -9" stroke="#58b040" stroke-width="2.2" fill="none"/>
<path d="M31 19 q-1 -6 4 -5 q3 -5 6 -1 q5 -2 6 4 q2 8 -8 16 q-9 -5 -8 -14z" fill="url(#fy)"/>
<ellipse cx="40" cy="19" rx="3.5" ry="2" fill="#ff5a00"/>
<path d="M33 21 q3 10 7 13 q4 -3 7 -13 q-7 5 -14 0z" fill="#f5b316"/>
<path d="M47 9 q-1 -8 6 -7 q4 -5 8 0 q7 -2 8 5 q3 11 -10 21 q-12 -7 -12 -19z" fill="url(#fy)"/>
<ellipse cx="58" cy="11" rx="5" ry="2.5" fill="#ff5a00"/>
<path d="M49 13 q3 12 9 17 q6 -5 10 -17 q-9 6 -19 0z" fill="#f5b316"/>
<circle cx="73" cy="32" r="5.5" fill="#f2a23a"/><circle cx="73" cy="32" r="2.2" fill="#c8701a"/>
<rect x="85" y="0" width="1" height="40" fill="#c9c9c9"/></svg>
<svg style="position:absolute;left:351px;top:739px;" width="20" height="18" viewBox="0 0 20 18"><rect x="2" y="4" width="10" height="9" fill="none" stroke="#111" stroke-width="1.4"/><path d="M1 1.5h12M1 15.5h12" stroke="#111" stroke-width="1.4"/><rect x="14.5" y="4" width="2.2" height="3" fill="#111"/><rect x="15" y="8" width="1.4" height="7" fill="#111"/><rect x="15" y="1" width="1.4" height="2" fill="#111"/></svg>
<svg style="position:absolute;left:398px;top:736px;" width="27" height="24" viewBox="0 0 27 24"><defs><linearGradient id="cp1" x1="0" y1="0" x2="0" y2="1"><stop offset="0" stop-color="#18a8f5"/><stop offset="0.45" stop-color="#2aa890"/><stop offset="0.75" stop-color="#90c830"/><stop offset="1" stop-color="#f8c800"/></linearGradient>
<linearGradient id="cp2" x1="0" y1="0" x2="0" y2="1"><stop offset="0" stop-color="#a84ae8"/><stop offset="0.5" stop-color="#f05098"/><stop offset="1" stop-color="#ffa858"/></linearGradient></defs>
<path d="M14 1 H18 Q20 1 20.5 3 L21.5 7.5 H15 Z" fill="#2458d8"/>
<path d="M6 1 H16.5 L12.5 15.8 H2.5 Q1 15.8 1.4 14.2 L4.4 2.8 Q5 1 6 1 Z" fill="url(#cp1)"/>
<path d="M6 15.5 H13 L10.5 22.5 H8.5 Q7 22.5 6.5 21 Z" fill="#ff5a30"/>
<path d="M16.3 7 H24 Q25.6 7 25.2 8.6 L21.8 21 Q21.3 22.5 20 22.5 H12.3 Z" fill="url(#cp2)"/></svg>
<svg style="position:absolute;left:447px;top:735px;" width="26" height="26" viewBox="0 0 26 26"><defs><linearGradient id="ed1" x1="0" y1="0.2" x2="1" y2="0.6"><stop offset="0" stop-color="#2ab8f2"/><stop offset="0.5" stop-color="#30c8b0"/><stop offset="1" stop-color="#62e050"/></linearGradient>
<linearGradient id="ed2" x1="0" y1="0" x2="0.8" y2="1"><stop offset="0" stop-color="#1a8ae0"/><stop offset="1" stop-color="#10509e"/></linearGradient></defs>
<circle cx="13" cy="13" r="12" fill="url(#ed1)"/>
<path d="M1 13 C1 8 5 6.5 9 6.5 C12 6.5 14 8 14.5 10.5 C12 10.5 10.5 12.5 10.5 14.5 C10.5 17.8 13 19.8 17 19.8 C20 19.8 22 19.3 23.8 18.5 C21.5 23 17.5 25 13 25 C6 25 1 20 1 13 Z" fill="url(#ed2)"/>
<ellipse cx="13.8" cy="14" rx="2.6" ry="3.3" fill="#e9e0d2"/>
<path d="M15 16.8 C17.5 18.6 20.5 18.8 24 17.6" fill="none" stroke="#e9e0d2" stroke-width="1.3"/></svg>
<svg style="position:absolute;left:497px;top:738px;" width="24" height="21" viewBox="0 0 24 21"><path d="M1 2 h8 l2 2 h12 v16 h-22z" fill="#f2b62b"/><rect x="1" y="7" width="22" height="13" fill="#ffd35c"/><rect x="7" y="12" width="10" height="8" fill="#2d7fd6"/><rect x="10" y="15" width="4" height="5" fill="#ffd35c"/></svg>
<svg style="position:absolute;left:546px;top:736px;" width="23" height="23" viewBox="0 0 23 23"><rect x="0.5" y="0.5" width="22" height="22" rx="3" fill="#b30b00"/><path d="M6 17 q2 -3 5 -9 q1 -4 0 -4 q-1 0 -1 3 q2 5 6 8 q2 1 2 0 q-2 -1 -8 0 q-4 2 -4 2z" fill="none" stroke="#fff" stroke-width="1.5"/></svg>
<svg style="position:absolute;left:594px;top:736px;" width="26" height="24" viewBox="0 0 26 24"><path d="M1 9 L13 1 L25 9 V23 H1 Z" fill="#1d8ae0"/><path d="M1 9 L13 17 L25 9 V23 H1 Z" fill="#3aa9f0"/><path d="M2 9 L13 3 L24 9 L13 14 Z" fill="#fff"/></svg>
<svg style="position:absolute;left:643px;top:735px;" width="26" height="26" viewBox="0 0 26 26"><circle cx="13" cy="13" r="12" fill="#db4437"/><path d="M13 13 L2.6 7 A12 12 0 0 0 7 23.4 Z" fill="#0f9d58"/><path d="M13 13 L7 23.4 A12 12 0 0 0 23.4 7 L13 7 Z" fill="#f4c20d"/>
<path d="M13 13 L13 7 L23.4 7 A12 12 0 0 0 13 1 Z" fill="#db4437"/>
<circle cx="13" cy="13" r="5.5" fill="#fff"/><circle cx="13" cy="13" r="4.3" fill="#4285f4"/></svg>
<svg style="position:absolute;left:693px;top:736px;" width="25" height="24" viewBox="0 0 25 24"><rect x="9" y="3" width="15" height="18" fill="#fff" stroke="#2b579a"/><path d="M12 7h10M12 10h10M12 13h10M12 16h10" stroke="#2b579a"/><path d="M0.5 3 L13 0.5 V23.5 L0.5 21 Z" fill="#2b579a"/><text x="2.5" y="16" font-family="Liberation Sans" font-weight="700" font-size="10" fill="#fff">W</text></svg>
<div style="left:730px;top:728px;width:48px;height:40px;background:rgba(255,255,255,0.45);"></div>
<div style="left:730px;top:766px;width:48px;height:2px;background:#0078d4;"></div>
<svg style="position:absolute;left:742px;top:736px;" width="25" height="24" viewBox="0 0 25 24"><rect x="9" y="3" width="15" height="18" fill="#fff" stroke="#217346"/><path d="M12 7h10M12 10h10M12 13h10M12 16h10M17 3v18" stroke="#217346"/><path d="M0.5 3 L13 0.5 V23.5 L0.5 21 Z" fill="#217346"/><text x="3" y="16" font-family="Liberation Sans" font-weight="700" font-size="10" fill="#fff">X</text></svg>
<svg style="position:absolute;left:925px;top:737px;" width="25" height="25" viewBox="0 0 25 25"><ellipse cx="11" cy="5" rx="8" ry="3" fill="#f5a623"/><ellipse cx="13" cy="10" rx="9" ry="3" fill="#ee8a1a"/><ellipse cx="11" cy="15" rx="8" ry="3" fill="#f5a623"/>
<path d="M3 5v2q8 4 16 0v-2M4 10v2q9 4 18 0v-2M3 15v2q8 4 16 0v-2" fill="#d8781a"/>
<path d="M7 23 L11 19.5 L15 23" fill="none" stroke="#5fa83a" stroke-width="2.2"/></svg>
<div class="t" style="left:956.00px;top:742px;font-weight:400;font-size:13.5px;line-height:13.5px;font-family:'Liberation Sans';color:#222;letter-spacing:-0.333px;">USD/BRL</div>
<div class="t" style="left:1022.00px;top:742px;font-weight:400;font-size:13.5px;line-height:13.5px;font-family:'Liberation Sans';color:#2a8a2a;letter-spacing:-0.200px;">+1,23%</div>
<svg style="position:absolute;left:1092px;top:744px;" width="15" height="9" viewBox="0 0 15 9"><path d="M1 7.5 L7 1.5 L13 7.5" fill="none" stroke="#222" stroke-width="1.5"/></svg>
<svg style="position:absolute;left:1114px;top:742px;" width="19" height="14" viewBox="0 0 19 14"><rect x="6" y="3.5" width="11" height="8" fill="none" stroke="#222" stroke-width="1.2"/><rect x="17" y="6" width="1.5" height="3" fill="#222"/><path d="M1 3 v4 q0 2 2 2 h3 M3 1 v3 M5 1 v3 M3 9 v4" stroke="#222" stroke-width="1.1" fill="none"/></svg>
<svg style="position:absolute;left:1141px;top:740px;" width="14" height="17" viewBox="0 0 14 17"><path d="M3 2 q-2 6 0 13 M11 2 q2 6 0 13" fill="none" stroke="#222" stroke-width="1.2"/><rect x="2.5" y="5.5" width="7" height="6" fill="none" stroke="#222" stroke-width="1.2"/><path d="M9.5 7.5 l3 -1.5 v5 l-3 -1.5" fill="none" stroke="#222" stroke-width="1.1"/></svg>
<svg style="position:absolute;left:1165px;top:742px;" width="15" height="14" viewBox="0 0 15 14"><path d="M1.5 12 q0 -10 11 -10 M4 12 q0 -7 8 -7 M6.5 12 q0 -4 5 -4" fill="none" stroke="#222" stroke-width="1.3"/><circle cx="11" cy="11" r="1.5" fill="#222"/></svg>
<svg style="position:absolute;left:1186px;top:742px;" width="18" height="14" viewBox="0 0 18 14"><path d="M1 4.5 h3 l4 -3.5 v12 l-4 -3.5 h-3 z" fill="none" stroke="#222" stroke-width="1.2"/><path d="M10.5 4 q2 3 0 6 M13 2.5 q3 4.5 0 9" fill="none" stroke="#222" stroke-width="1.2"/><path d="M15.5 1 q4 6 0 12" fill="none" stroke="#999" stroke-width="1"/></svg>
<div class="t" style="left:1212.00px;top:734px;font-weight:400;font-size:12px;line-height:12px;font-family:'Liberation Sans';color:#222;letter-spacing:-0.500px;">POR</div>
<div class="t" style="left:1211.04px;top:751px;font-weight:400;font-size:12px;line-height:12px;font-family:'Liberation Sans';color:#222;transform:scaleX(0.9559);letter-spacing:-0.600px;">PTB2</div>
<div class="t" style="left:1264.02px;top:733px;font-weight:400;font-size:12px;line-height:12px;font-family:'Liberation Sans';color:#222;transform:scaleX(0.9774);letter-spacing:-0.600px;">14:46</div>
<div class="t" style="left:1249.00px;top:751px;font-weight:400;font-size:12px;line-height:12px;font-family:'Liberation Sans';color:#222;letter-spacing:-0.222px;">10/09/2024</div>
<svg style="position:absolute;left:1324px;top:739px;" width="26" height="25" viewBox="0 0 26 25"><path d="M1 1 h16 v12 h-11 l-3 3 v-3 h-2 z" fill="#111"/><path d="M4 4h10M4 7h10M4 10h7" stroke="#e8e6b6" stroke-width="1.2"/><circle cx="18" cy="17" r="6.5" fill="#c8c8c8" stroke="#888" stroke-width="1"/><text x="15.3" y="21" font-family="Liberation Sans" font-weight="700" font-size="10" fill="#222">1</text></svg>
<div style="left:1361px;top:728px;width:1px;height:40px;background:#c9c7a0;"></div>
</body></html>
